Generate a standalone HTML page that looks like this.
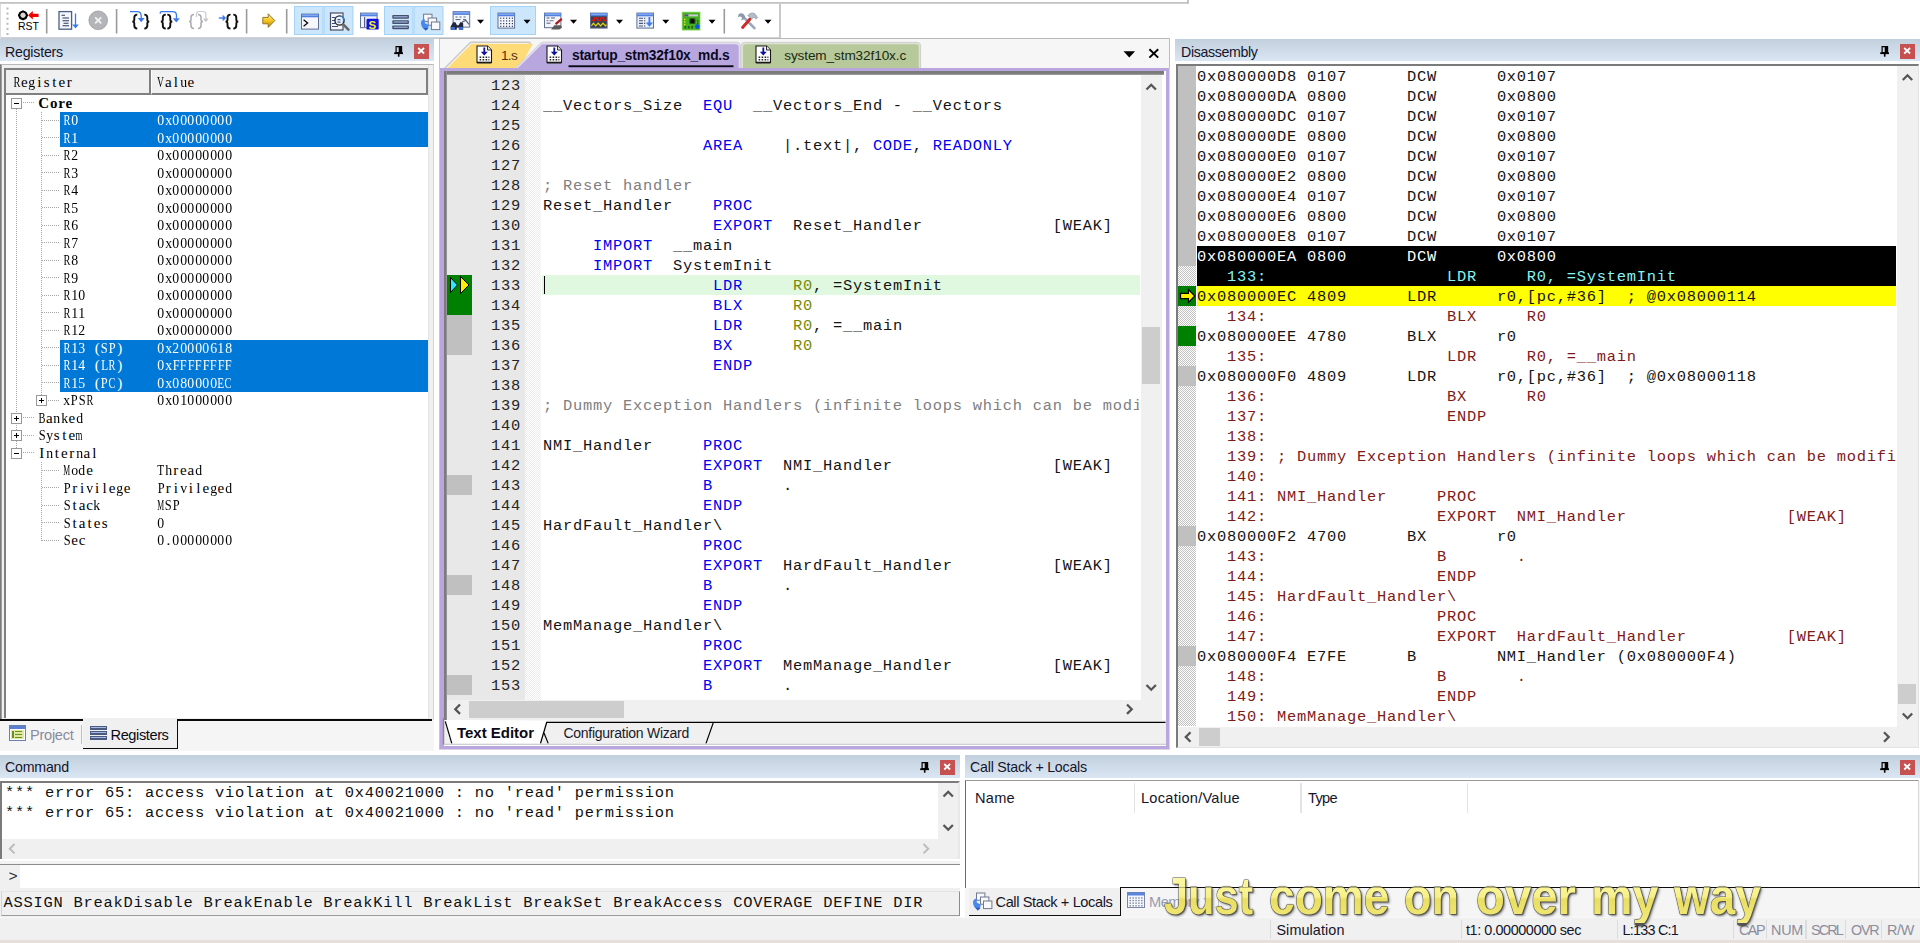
<!DOCTYPE html>
<html><head><meta charset="utf-8">
<style>
*{box-sizing:border-box;margin:0;padding:0}
html,body{width:1920px;height:943px;overflow:hidden;background:#fff}
body{position:relative;font-family:"Liberation Sans",sans-serif;font-size:14px;color:#000}
.abs,.a{position:absolute}
.mono{font-family:"Liberation Mono",monospace;font-size:15.4px;letter-spacing:0.76px;line-height:20px;white-space:pre}
.hdr{position:absolute;height:22px;background:linear-gradient(#c2cfdd,#dae6f3);font-size:14.2px;line-height:23px;padding-left:5px;color:#15152a;white-space:nowrap}
.xbtn{position:absolute;width:15px;height:15px;background:#c75050}
.xbtn svg{position:absolute;left:0;top:0}
.pin{position:absolute;width:9px;height:11px}
.ss{font-family:"Liberation Serif",serif;font-size:15px;white-space:pre}
.c{display:inline-block;width:7.5px;text-align:center;white-space:pre}
.c>i{display:inline-block;font-style:normal;transform-origin:50% 50%}
.row{position:absolute;height:17.5px;line-height:17.5px;left:0}
.sel{position:absolute;left:60px;width:368px;height:17.5px;background:#0078d7}
.dv{position:absolute;width:1px;background-image:linear-gradient(#a6a6a6 50%,transparent 50%);background-size:1px 2px}
.dh{position:absolute;height:1px;background-image:linear-gradient(90deg,#a6a6a6 50%,transparent 50%);background-size:2px 1px}
.box{position:absolute;width:11px;height:11px;border:1px solid #999;background:#fff}
.box:before{content:"";position:absolute;left:2px;top:4px;width:5px;height:1px;background:#000}
.box.p:after{content:"";position:absolute;left:4px;top:2px;width:1px;height:5px;background:#000}
</style></head><body>
<!-- toolbar -->
<div id="toolbar" class="a" style="left:0;top:0;width:1920px;height:39px;background:#fff">
<div class="a" style="left:0;top:2px;width:1188px;height:2px;background:linear-gradient(#bdbdbd,#d4d4d4)"></div>
<div class="a" style="left:1187px;top:0;width:2px;height:4px;background:#c4c4c4"></div>
<div class="a" style="left:0;top:37px;width:780px;height:2px;background:linear-gradient(#d6d9dd,#bfc6ce)"></div>
<div class="a" style="left:779px;top:4px;width:1.5px;height:34px;background:#c9c9c9"></div>
<div class="a" style="left:0;top:4px;width:1px;height:35px;background:#dcdcdc"></div>
<svg class="a" style="left:0;top:0" width="800" height="39" viewBox="0 0 800 39">
<rect x="6.5" y="7.5" width="2" height="2" fill="#b8b8b8"/>
<rect x="6.5" y="12.6" width="2" height="2" fill="#b8b8b8"/>
<rect x="6.5" y="17.7" width="2" height="2" fill="#b8b8b8"/>
<rect x="6.5" y="22.8" width="2" height="2" fill="#b8b8b8"/>
<rect x="6.5" y="27.9" width="2" height="2" fill="#b8b8b8"/>
<rect x="6.5" y="33.0" width="2" height="2" fill="#b8b8b8"/>
<path d="M23 11.400l2.700 1.200 1.300 2.700-1.300 2.700-2.700 1.200-2.700-1.200-1.300-2.700 1.300-2.700z" fill="#d8d8d8" stroke="#000" stroke-width="2.100" stroke-linejoin="round"/>
<path d="M28 15.300l4.800-4.300v2.700h5.800v3.200h-5.800v2.700z" fill="#f00000"/>
<text x="18" y="30" font-family="Liberation Sans" font-size="11.5" fill="#000" textLength="21" lengthAdjust="spacingAndGlyphs">RST</text>
<rect x="45.9" y="9" width="1.6" height="24.5" fill="#9b9b9b"/>
<rect x="59" y="11.6" width="12.6" height="17.6" fill="#f4f6fb" stroke="#4a6088" stroke-width="1.3"/>
<path d="M61.5 15.3h3.5M62.5 18h6.5M62.5 20.7h6.5M63.5 23.2h5M62.5 25.8h6.5" stroke="#2b3b5c" stroke-width="1.1"/>
<path d="M75.5 13.5v13" stroke="#3a7af0" stroke-width="1.3"/><path d="M72.2 24.6h6.6l-3.3 4z" fill="#3a7af0"/>
<circle cx="98.2" cy="20.3" r="9.3" fill="#b4b5b8" stroke="#9a9b9f" stroke-width="0.8"/>
<path d="M95.200 17.300l6 6M101.200 17.300l-6 6" stroke="#f4f4f4" stroke-width="1.700"/>
<rect x="115.8" y="9" width="1.6" height="24.5" fill="#9b9b9b"/>
<path d="M137.3 14.6 c-2.6 0 -3 1 -3 3 v2.2 c0 1.4 -0.8 1.8 -2 1.8 c1.2 0 2 0.4 2 1.8 v2.2 c0 2 0.4 3 3 3" fill="none" stroke="#111" stroke-width="1.9"/>
<path d="M144.3 14.6 c2.6 0 3 1 3 3 v2.2 c0 1.4 0.8 1.8 2 1.8 c-1.2 0 -2 0.4 -2 1.8 v2.2 c0 2 -0.4 3 -3 3" fill="none" stroke="#111" stroke-width="1.9"/>
<path d="M130 11.7h7c3 0 4.2 1.6 4.2 4.4v2.4" fill="none" stroke="#3a78f0" stroke-width="1.3"/><path d="M137.8 18h6.8l-3.4 4.2z" fill="#3a78f0"/>
<path d="M165.8 14.6 c-2.6 0 -3 1 -3 3 v2.2 c0 1.4 -0.8 1.8 -2 1.8 c1.2 0 2 0.4 2 1.8 v2.2 c0 2 0.4 3 3 3" fill="none" stroke="#111" stroke-width="1.9"/>
<path d="M167.3 14.6 c2.6 0 3 1 3 3 v2.2 c0 1.4 0.8 1.8 2 1.8 c-1.2 0 -2 0.4 -2 1.8 v2.2 c0 2 -0.4 3 -3 3" fill="none" stroke="#111" stroke-width="1.9"/>
<path d="M160.3 13.8v-1.2c0-0.6 0.4-0.9 1-0.9h11.2c3 0 4 1.4 4 3.8v3" fill="none" stroke="#3a78f0" stroke-width="1.3"/><path d="M172.8 18.3h7l-3.5 4.2z" fill="#3a78f0"/>
<path d="M194.0 14.6 c-2.6 0 -3 1 -3 3 v2.2 c0 1.4 -0.8 1.8 -2 1.8 c1.2 0 2 0.4 2 1.8 v2.2 c0 2 0.4 3 3 3" fill="none" stroke="#a9abb0" stroke-width="1.5"/>
<path d="M198.0 14.6 c2.6 0 3 1 3 3 v2.2 c0 1.4 0.8 1.8 2 1.8 c-1.2 0 -2 0.4 -2 1.8 v2.2 c0 2 -0.4 3 -3 3" fill="none" stroke="#a9abb0" stroke-width="1.5"/>
<path d="M196.5 17v-3c0-1.6 1-2.5 2.8-2.5h3.6c2 0 3 1 3 2.8v4.5" fill="none" stroke="#c9cbcf" stroke-width="1.2"/><path d="M203 18.6h5.6l-2.8 3.6z" fill="#c3c5c9"/>
<path d="M218.8 18h5" stroke="#3a78f0" stroke-width="1.4"/><path d="M222.6 14.8l3.6 3.2-3.6 3.2z" fill="#3a78f0"/>
<path d="M230.5 14.6 c-2.6 0 -3 1 -3 3 v2.2 c0 1.4 -0.8 1.8 -2 1.8 c1.2 0 2 0.4 2 1.8 v2.2 c0 2 0.4 3 3 3" fill="none" stroke="#111" stroke-width="1.9"/>
<path d="M233.3 14.6 c2.6 0 3 1 3 3 v2.2 c0 1.4 0.8 1.8 2 1.8 c-1.2 0 -2 0.4 -2 1.8 v2.2 c0 2 -0.4 3 -3 3" fill="none" stroke="#111" stroke-width="1.9"/>
<rect x="245.8" y="9" width="1.6" height="24.5" fill="#9b9b9b"/>
<defs><linearGradient id="yg" x1="0" y1="0" x2="0" y2="1"><stop offset="0" stop-color="#fff0a0"/><stop offset="0.5" stop-color="#f6c420"/><stop offset="1" stop-color="#b88a10"/></linearGradient></defs>
<path d="M262.8 17.4h5.4v-3.6l6.6 6.8-6.6 6.8v-3.6h-5.4z" fill="url(#yg)" stroke="#8a6a18" stroke-width="0.9"/>
<rect x="285.9" y="9" width="1.6" height="24.5" fill="#9b9b9b"/>
<rect x="294.5" y="6.5" width="28.5" height="28" fill="#cce6fb" stroke="#a3d3f9" stroke-width="1"/>
<rect x="324.0" y="6.5" width="29.0" height="28" fill="#cce6fb" stroke="#a3d3f9" stroke-width="1"/>
<rect x="384.5" y="6.5" width="28.5" height="28" fill="#cce6fb" stroke="#a3d3f9" stroke-width="1"/>
<rect x="414.0" y="6.5" width="29.0" height="28" fill="#cce6fb" stroke="#a3d3f9" stroke-width="1"/>
<rect x="490.5" y="6.5" width="45.0" height="28" fill="#cce6fb" stroke="#a3d3f9" stroke-width="1"/>
<rect x="301.5" y="14.1" width="17.0" height="15.0" fill="#f4f6fc" stroke="#5f6f8f" stroke-width="1"/><rect x="301.5" y="14.1" width="17.0" height="3.2" fill="#4f80e0"/><rect x="302.0" y="14.6" width="16.0" height="1.2" fill="#8fb0f0"/>
<path d="M303.600 19.800l4 3.200-4 3.200" fill="none" stroke="#000" stroke-width="1.250"/>
<rect x="330.5" y="13" width="12.5" height="17" fill="#f4f6fc" stroke="#4a4f60" stroke-width="1.2"/>
<path d="M332 17.5h3M332 20.5h3M332 23.5h3M332 26.5h6" stroke="#3a4f80" stroke-width="1"/>
<circle cx="339.5" cy="20.5" r="4.6" fill="#e8f0ff" fill-opacity="0.7" stroke="#222" stroke-width="1.4"/><path d="M339.5 15.9a4.6 4.6 0 0 1 4.6 4.6" fill="none" stroke="#2a8ae0" stroke-width="1.4"/>
<path d="M337.5 19h3v1.2h-3zM337.5 21.6h3v1.2h-3z" fill="#3a5fa0"/>
<path d="M343 24.2l5.4 5.4" stroke="#666" stroke-width="2.6" stroke-linecap="round"/>
<rect x="360.5" y="13.1" width="16.6" height="14.6" fill="#f0f3fa" stroke="#5f6f8f" stroke-width="1"/><rect x="360.5" y="13.1" width="16.6" height="3.2" fill="#4f80e0"/><rect x="361.0" y="13.6" width="15.6" height="1.2" fill="#8fb0f0"/>
<rect x="364" y="17" width="1.2" height="10" fill="#55607a"/>
<rect x="366.5" y="18.8" width="12.2" height="10.8" rx="1.2" fill="#1010e0"/>
<text x="368.6" y="28.6" font-family="Liberation Sans" font-weight="bold" font-size="11.5" fill="#f4f020">S</text>
<rect x="392.3" y="15.0" width="16.6" height="3.8" rx="0.8" fill="#44506e"/><rect x="393.6" y="16.2" width="14" height="1.2" fill="#9fb2dc"/>
<rect x="392.3" y="20.2" width="16.6" height="3.8" rx="0.8" fill="#44506e"/><rect x="393.6" y="21.4" width="14" height="1.2" fill="#9fb2dc"/>
<rect x="392.3" y="25.4" width="16.6" height="3.8" rx="0.8" fill="#44506e"/><rect x="393.6" y="26.6" width="14" height="1.2" fill="#9fb2dc"/>
<rect x="423.6" y="14.2" width="8.4" height="7.2" fill="#f8f9fd" stroke="#70788c" stroke-width="1"/>
<rect x="428.2" y="18" width="8.4" height="7.2" fill="#f8f9fd" stroke="#70788c" stroke-width="1"/>
<rect x="431.4" y="22" width="8.4" height="7.6" fill="#f8f9fd" stroke="#70788c" stroke-width="1"/>
<path d="M421 22.5c0.3-2.4 1.8-3.6 3.6-3.6l0.3 4.4 3.8 1.6-0.5 3.4-2.2 1.6c-2.8-0.4-5-3.4-5-7.4z" fill="#4a88ee"/><path d="M423.5 27.8l5 0.4-2.8 2.6z" fill="#2a58c8"/>
<rect x="453.1" y="11.7" width="16.6" height="15.4" fill="#f4f6fc" stroke="#5f6f8f" stroke-width="1"/><rect x="453.1" y="11.7" width="16.6" height="3.2" fill="#4f80e0"/><rect x="453.6" y="12.2" width="15.6" height="1.2" fill="#8fb0f0"/>
<path d="M455.5 17h2M459.5 17h2M463.5 17h2M455.5 19.6h5M463 19.6h3" stroke="#50607c" stroke-width="1"/>
<path d="M450.6 29.8v-3.4l2.6-4.2h2.2l1.6 3h1.6l1.6-3h2.2l0.8 1.4v6.2h-4.4v-2.4h-2v2.4z" fill="#202840"/><rect x="451.2" y="27" width="3.6" height="2.8" fill="#3a70e0"/><rect x="459.2" y="27" width="3.6" height="2.8" fill="#3a70e0"/>
<path d="M462 22l4-1.6 3 4" fill="none" stroke="#55607a" stroke-width="1.2"/>
<path d="M477.0 19.7h7l-3.5 4z" fill="#000"/>
<rect x="498.0" y="13.1" width="16.6" height="15.0" fill="#f4f6fc" stroke="#5f6f8f" stroke-width="1"/><rect x="498.0" y="13.1" width="16.6" height="3.2" fill="#4f80e0"/><rect x="498.5" y="13.6" width="15.6" height="1.2" fill="#8fb0f0"/>
<rect x="500.2" y="17.6" width="1.2" height="1.2" fill="#2c3c5c"/>
<rect x="503.1" y="17.6" width="1.2" height="1.2" fill="#2c3c5c"/>
<rect x="506.0" y="17.6" width="1.2" height="1.2" fill="#2c3c5c"/>
<rect x="508.9" y="17.6" width="1.2" height="1.2" fill="#2c3c5c"/>
<rect x="511.8" y="17.6" width="1.2" height="1.2" fill="#2c3c5c"/>
<rect x="500.2" y="20.3" width="1.2" height="1.2" fill="#2c3c5c"/>
<rect x="503.1" y="20.3" width="1.2" height="1.2" fill="#2c3c5c"/>
<rect x="506.0" y="20.3" width="1.2" height="1.2" fill="#2c3c5c"/>
<rect x="508.9" y="20.3" width="1.2" height="1.2" fill="#2c3c5c"/>
<rect x="511.8" y="20.3" width="1.2" height="1.2" fill="#2c3c5c"/>
<rect x="500.2" y="23.0" width="1.2" height="1.2" fill="#2c3c5c"/>
<rect x="503.1" y="23.0" width="1.2" height="1.2" fill="#2c3c5c"/>
<rect x="506.0" y="23.0" width="1.2" height="1.2" fill="#2c3c5c"/>
<rect x="508.9" y="23.0" width="1.2" height="1.2" fill="#2c3c5c"/>
<rect x="511.8" y="23.0" width="1.2" height="1.2" fill="#2c3c5c"/>
<rect x="500.2" y="25.7" width="1.2" height="1.2" fill="#2c3c5c"/>
<rect x="503.1" y="25.7" width="1.2" height="1.2" fill="#2c3c5c"/>
<rect x="506.0" y="25.7" width="1.2" height="1.2" fill="#2c3c5c"/>
<rect x="508.9" y="25.7" width="1.2" height="1.2" fill="#2c3c5c"/>
<rect x="511.8" y="25.7" width="1.2" height="1.2" fill="#2c3c5c"/>
<path d="M523.5 19.7h7l-3.5 4z" fill="#000"/>
<rect x="544.5" y="13.1" width="16.4" height="14.6" fill="#f4f6fc" stroke="#5f6f8f" stroke-width="1"/><rect x="544.5" y="13.1" width="16.4" height="3.2" fill="#4f80e0"/><rect x="545.0" y="13.6" width="15.4" height="1.2" fill="#8fb0f0"/>
<path d="M546.5 18h3M551 18h4M546.5 20.6h2M549.5 20.6h4M546.5 23.2h4" stroke="#8a8f9c" stroke-width="1.4"/>
<path d="M556.2 23.6l5-4.2" stroke="#b01818" stroke-width="2.2" stroke-linecap="round"/><path d="M551 29.6l3.4-4.4h6.4l1.2 2.2-2.6 2.2z" fill="#5a5a5a"/>
<path d="M570.0 19.7h7l-3.5 4z" fill="#000"/>
<rect x="590.5" y="13.1" width="16.6" height="15.0" fill="#3a3f4c" stroke="#5f6f8f" stroke-width="1"/><rect x="590.5" y="13.1" width="16.6" height="3.2" fill="#4f80e0"/><rect x="591.0" y="13.6" width="15.6" height="1.2" fill="#8fb0f0"/>
<path d="M591.4 20.4h3v-2.4h3.2v2.4h3.2v-2.4h3.2v2.4h2.4" fill="none" stroke="#f01010" stroke-width="1.3"/>
<path d="M591.4 25.8l2-2.6 2.4 2.6 2.4-2.6 2.4 2.6 2.4-2.6 2.4 2.6 1-1.2" fill="none" stroke="#e8d810" stroke-width="1.2"/>
<path d="M616.0 19.7h7l-3.5 4z" fill="#000"/>
<rect x="636.9" y="13.1" width="16.6" height="15.0" fill="#e8eefb" stroke="#5f6f8f" stroke-width="1"/><rect x="636.9" y="13.1" width="16.6" height="3.2" fill="#4f80e0"/><rect x="637.4" y="13.6" width="15.6" height="1.2" fill="#8fb0f0"/>
<path d="M639 18.2h4M639 20.8h4M639 23.4h4M639 26h4" stroke="#4a5a78" stroke-width="1.1"/><path d="M644.2 18.2h1M644.2 20.8h1M644.2 23.4h1M644.2 26h1" stroke="#222" stroke-width="1.1"/>
<path d="M649.4 17v6" stroke="#3a7af0" stroke-width="1.8"/><path d="M645.8 22.6h7.2l-3.6 4.2z" fill="#3a7af0"/>
<path d="M662.3 19.7h7l-3.5 4z" fill="#000"/>
<rect x="682.2" y="12.2" width="17.8" height="17.8" fill="#42b020" stroke="#7ad048" stroke-width="0.8"/>
<rect x="684.4" y="14.4" width="13.6" height="2" fill="#c8ccd0"/><rect x="684.4" y="14.4" width="4" height="2" fill="#50545c"/>
<circle cx="692.4" cy="21.2" r="2.8" fill="#101010"/><rect x="690" y="18.6" width="5" height="5" fill="none" stroke="#2c5c20" stroke-width="0.8"/>
<rect x="684" y="18.6" width="1.4" height="1.4" fill="#e8e020"/><rect x="684" y="21.2" width="1.4" height="1.4" fill="#e8e020"/><rect x="684" y="23.8" width="1.4" height="1.4" fill="#e8e020"/>
<path d="M684.6 26h1.6v2.6h-1.6zM688 26h1.6v2.6h-1.6zM691.4 26h1.6v2.6h-1.6zM697 20h1.4v1.4h-1.4zM697 22.6h1.4v1.4h-1.4z" fill="#285a20"/>
<circle cx="697.4" cy="26.6" r="2.3" fill="#1050e8"/>
<path d="M708.5 19.7h7l-3.5 4z" fill="#000"/>
<rect x="723.5" y="9" width="1.6" height="24.5" fill="#9b9b9b"/>
<path d="M742.8 16.4l11.6 11.8" stroke="#9aa6b8" stroke-width="2.6" stroke-linecap="round"/>
<path d="M740.6 13.2c-2 0.4-3 2.2-2.4 4.2l1.2-1 2 0.4 0.6 2-1.2 1.2c2 0.6 3.8-0.6 4.2-2.4 0.4-2.4-1.8-4.8-4.4-4.400z" fill="#8c98ac"/>
<path d="M750 19l-7.4 8.4" stroke="#d02828" stroke-width="3" stroke-linecap="round"/>
<path d="M747.8 15.600c1.800-2.600 5-3.400 7.200-1.600l2.600 3.600-1.800 1.400-1.800-2-2.200 1.800z" fill="#b4bcc8" stroke="#8a94a6" stroke-width="0.7"/>
<path d="M764.5 19.7h7l-3.5 4z" fill="#000"/>
</svg>
</div>
<!-- regs -->
<div id="regs" class="a" style="left:0;top:39px;width:434px;height:712px;background:#f5f5f5;overflow:hidden">
<div class="hdr" style="left:0;top:0;width:434px"></div>
<div class="a" style="left:5.0px;top:5.6px;font-size:14.20px;line-height:14.20px;letter-spacing:-0.220px;white-space:pre;color:#15152a;">Registers</div>
<svg class="a" style="left:393.5px;top:6.6px" width="10" height="11" viewBox="0 0 10 11"><path d="M2.100 0.600h5.400v6h-5.400z" fill="none" stroke="#000" stroke-width="1.200"/><rect x="4.700" y="0.600" width="3.400" height="6" fill="#000"/><rect x="0.200" y="6.300" width="8.800" height="1.800" fill="#000"/><rect x="3.900" y="8" width="1.600" height="2.700" fill="#000"/></svg>
<div class="xbtn" style="left:414.0px;top:5.0px"><svg width="15" height="15" viewBox="0 0 15 15"><path d="M4.200 4l5.900 5.500M10.100 4l-5.900 5.500" stroke="#fff" stroke-width="1.800"/></svg></div>
<div class="a" style="left:0;top:22px;width:434px;height:3px;background:#fff"></div>
<div class="a" style="left:0;top:25px;width:434px;height:656px;background:#f0f0f0;border-left:1px solid #7a7a7a;border-top:1px solid #b9b9b9;border-right:1px solid #d5d5d5"></div>
<div class="a" style="left:1px;top:26px;width:1px;height:654px;background:#a0a0a0"></div>
<div class="a" style="left:428px;top:26px;width:1px;height:654px;background:#e3e3e3"></div>
<div class="a" style="left:4px;top:29px;width:424px;height:650px;background:#fff;border-left:2px solid #808080;border-top:2px solid #808080"></div>
<div class="a" style="left:6px;top:31px;width:145px;height:25px;background:#f0f0f0;border-right:2px solid #808080;border-bottom:2px solid #808080"></div>
<div class="a" style="left:151px;top:31px;width:277px;height:25px;background:#f0f0f0;border-right:2px solid #808080;border-bottom:2px solid #808080;border-left:1px solid #fff"></div>
<div class="a ss" style="left:13px;top:35px;line-height:17px"><span class="c"><i style="margin:0 -1.25px;transform:scaleX(0.690)">R</i></span><span class="c">e</span><span class="c"><i style="margin:0 0.00px;transform:scaleX(0.920)">g</i></span><span class="c">i</span><span class="c">s</span><span class="c">t</span><span class="c">e</span><span class="c">r</span></div>
<div class="a ss" style="left:157px;top:35px;line-height:17px"><span class="c"><i style="margin:0 -1.67px;transform:scaleX(0.637)">V</i></span><span class="c">a</span><span class="c">l</span><span class="c"><i style="margin:0 0.00px;transform:scaleX(0.920)">u</i></span><span class="c">e</span></div>
<div class="sel" style="top:335.8px"></div>
<div class="sel" style="top:73.3px"></div>
<div class="sel" style="top:90.8px"></div>
<div class="sel" style="top:300.8px"></div>
<div class="sel" style="top:318.3px"></div>
<div class="dv" style="left:16px;top:69.8px;height:339.0px"></div>
<div class="dv" style="left:41px;top:73.3px;height:283.0px"></div>
<div class="dv" style="left:41px;top:423.3px;height:79.0px"></div>
<div class="dh" style="left:23px;top:63.1px;width:12px"></div>
<div class="box " style="left:11px;top:58.8px"></div>
<div class="row ss" style="left:38.3px;top:55.8px;color:#000;font-weight:bold;letter-spacing:0.800px">Core</div>
<div class="dh" style="left:42px;top:80.6px;width:18px"></div>
<div class="row ss" style="left:63.4px;top:73.3px;color:#fff"><span class="c"><i style="margin:0 -1.25px;transform:scaleX(0.690)">R</i></span><span class="c"><i style="margin:0 0.00px;transform:scaleX(0.920)">0</i></span></div>
<div class="row ss" style="left:157px;top:73.3px;color:#fff"><span class="c"><i style="margin:0 0.00px;transform:scaleX(0.920)">0</i></span><span class="c"><i style="margin:0 0.00px;transform:scaleX(0.920)">x</i></span><span class="c"><i style="margin:0 0.00px;transform:scaleX(0.920)">0</i></span><span class="c"><i style="margin:0 0.00px;transform:scaleX(0.920)">0</i></span><span class="c"><i style="margin:0 0.00px;transform:scaleX(0.920)">0</i></span><span class="c"><i style="margin:0 0.00px;transform:scaleX(0.920)">0</i></span><span class="c"><i style="margin:0 0.00px;transform:scaleX(0.920)">0</i></span><span class="c"><i style="margin:0 0.00px;transform:scaleX(0.920)">0</i></span><span class="c"><i style="margin:0 0.00px;transform:scaleX(0.920)">0</i></span><span class="c"><i style="margin:0 0.00px;transform:scaleX(0.920)">0</i></span></div>
<div class="dh" style="left:42px;top:98.1px;width:18px"></div>
<div class="row ss" style="left:63.4px;top:90.8px;color:#fff"><span class="c"><i style="margin:0 -1.25px;transform:scaleX(0.690)">R</i></span><span class="c"><i style="margin:0 0.00px;transform:scaleX(0.920)">1</i></span></div>
<div class="row ss" style="left:157px;top:90.8px;color:#fff"><span class="c"><i style="margin:0 0.00px;transform:scaleX(0.920)">0</i></span><span class="c"><i style="margin:0 0.00px;transform:scaleX(0.920)">x</i></span><span class="c"><i style="margin:0 0.00px;transform:scaleX(0.920)">0</i></span><span class="c"><i style="margin:0 0.00px;transform:scaleX(0.920)">0</i></span><span class="c"><i style="margin:0 0.00px;transform:scaleX(0.920)">0</i></span><span class="c"><i style="margin:0 0.00px;transform:scaleX(0.920)">0</i></span><span class="c"><i style="margin:0 0.00px;transform:scaleX(0.920)">0</i></span><span class="c"><i style="margin:0 0.00px;transform:scaleX(0.920)">0</i></span><span class="c"><i style="margin:0 0.00px;transform:scaleX(0.920)">0</i></span><span class="c"><i style="margin:0 0.00px;transform:scaleX(0.920)">0</i></span></div>
<div class="dh" style="left:42px;top:115.6px;width:18px"></div>
<div class="row ss" style="left:63.4px;top:108.3px;color:#000"><span class="c"><i style="margin:0 -1.25px;transform:scaleX(0.690)">R</i></span><span class="c"><i style="margin:0 0.00px;transform:scaleX(0.920)">2</i></span></div>
<div class="row ss" style="left:157px;top:108.3px;color:#000"><span class="c"><i style="margin:0 0.00px;transform:scaleX(0.920)">0</i></span><span class="c"><i style="margin:0 0.00px;transform:scaleX(0.920)">x</i></span><span class="c"><i style="margin:0 0.00px;transform:scaleX(0.920)">0</i></span><span class="c"><i style="margin:0 0.00px;transform:scaleX(0.920)">0</i></span><span class="c"><i style="margin:0 0.00px;transform:scaleX(0.920)">0</i></span><span class="c"><i style="margin:0 0.00px;transform:scaleX(0.920)">0</i></span><span class="c"><i style="margin:0 0.00px;transform:scaleX(0.920)">0</i></span><span class="c"><i style="margin:0 0.00px;transform:scaleX(0.920)">0</i></span><span class="c"><i style="margin:0 0.00px;transform:scaleX(0.920)">0</i></span><span class="c"><i style="margin:0 0.00px;transform:scaleX(0.920)">0</i></span></div>
<div class="dh" style="left:42px;top:133.1px;width:18px"></div>
<div class="row ss" style="left:63.4px;top:125.8px;color:#000"><span class="c"><i style="margin:0 -1.25px;transform:scaleX(0.690)">R</i></span><span class="c"><i style="margin:0 0.00px;transform:scaleX(0.920)">3</i></span></div>
<div class="row ss" style="left:157px;top:125.8px;color:#000"><span class="c"><i style="margin:0 0.00px;transform:scaleX(0.920)">0</i></span><span class="c"><i style="margin:0 0.00px;transform:scaleX(0.920)">x</i></span><span class="c"><i style="margin:0 0.00px;transform:scaleX(0.920)">0</i></span><span class="c"><i style="margin:0 0.00px;transform:scaleX(0.920)">0</i></span><span class="c"><i style="margin:0 0.00px;transform:scaleX(0.920)">0</i></span><span class="c"><i style="margin:0 0.00px;transform:scaleX(0.920)">0</i></span><span class="c"><i style="margin:0 0.00px;transform:scaleX(0.920)">0</i></span><span class="c"><i style="margin:0 0.00px;transform:scaleX(0.920)">0</i></span><span class="c"><i style="margin:0 0.00px;transform:scaleX(0.920)">0</i></span><span class="c"><i style="margin:0 0.00px;transform:scaleX(0.920)">0</i></span></div>
<div class="dh" style="left:42px;top:150.6px;width:18px"></div>
<div class="row ss" style="left:63.4px;top:143.3px;color:#000"><span class="c"><i style="margin:0 -1.25px;transform:scaleX(0.690)">R</i></span><span class="c"><i style="margin:0 0.00px;transform:scaleX(0.920)">4</i></span></div>
<div class="row ss" style="left:157px;top:143.3px;color:#000"><span class="c"><i style="margin:0 0.00px;transform:scaleX(0.920)">0</i></span><span class="c"><i style="margin:0 0.00px;transform:scaleX(0.920)">x</i></span><span class="c"><i style="margin:0 0.00px;transform:scaleX(0.920)">0</i></span><span class="c"><i style="margin:0 0.00px;transform:scaleX(0.920)">0</i></span><span class="c"><i style="margin:0 0.00px;transform:scaleX(0.920)">0</i></span><span class="c"><i style="margin:0 0.00px;transform:scaleX(0.920)">0</i></span><span class="c"><i style="margin:0 0.00px;transform:scaleX(0.920)">0</i></span><span class="c"><i style="margin:0 0.00px;transform:scaleX(0.920)">0</i></span><span class="c"><i style="margin:0 0.00px;transform:scaleX(0.920)">0</i></span><span class="c"><i style="margin:0 0.00px;transform:scaleX(0.920)">0</i></span></div>
<div class="dh" style="left:42px;top:168.1px;width:18px"></div>
<div class="row ss" style="left:63.4px;top:160.8px;color:#000"><span class="c"><i style="margin:0 -1.25px;transform:scaleX(0.690)">R</i></span><span class="c"><i style="margin:0 0.00px;transform:scaleX(0.920)">5</i></span></div>
<div class="row ss" style="left:157px;top:160.8px;color:#000"><span class="c"><i style="margin:0 0.00px;transform:scaleX(0.920)">0</i></span><span class="c"><i style="margin:0 0.00px;transform:scaleX(0.920)">x</i></span><span class="c"><i style="margin:0 0.00px;transform:scaleX(0.920)">0</i></span><span class="c"><i style="margin:0 0.00px;transform:scaleX(0.920)">0</i></span><span class="c"><i style="margin:0 0.00px;transform:scaleX(0.920)">0</i></span><span class="c"><i style="margin:0 0.00px;transform:scaleX(0.920)">0</i></span><span class="c"><i style="margin:0 0.00px;transform:scaleX(0.920)">0</i></span><span class="c"><i style="margin:0 0.00px;transform:scaleX(0.920)">0</i></span><span class="c"><i style="margin:0 0.00px;transform:scaleX(0.920)">0</i></span><span class="c"><i style="margin:0 0.00px;transform:scaleX(0.920)">0</i></span></div>
<div class="dh" style="left:42px;top:185.6px;width:18px"></div>
<div class="row ss" style="left:63.4px;top:178.3px;color:#000"><span class="c"><i style="margin:0 -1.25px;transform:scaleX(0.690)">R</i></span><span class="c"><i style="margin:0 0.00px;transform:scaleX(0.920)">6</i></span></div>
<div class="row ss" style="left:157px;top:178.3px;color:#000"><span class="c"><i style="margin:0 0.00px;transform:scaleX(0.920)">0</i></span><span class="c"><i style="margin:0 0.00px;transform:scaleX(0.920)">x</i></span><span class="c"><i style="margin:0 0.00px;transform:scaleX(0.920)">0</i></span><span class="c"><i style="margin:0 0.00px;transform:scaleX(0.920)">0</i></span><span class="c"><i style="margin:0 0.00px;transform:scaleX(0.920)">0</i></span><span class="c"><i style="margin:0 0.00px;transform:scaleX(0.920)">0</i></span><span class="c"><i style="margin:0 0.00px;transform:scaleX(0.920)">0</i></span><span class="c"><i style="margin:0 0.00px;transform:scaleX(0.920)">0</i></span><span class="c"><i style="margin:0 0.00px;transform:scaleX(0.920)">0</i></span><span class="c"><i style="margin:0 0.00px;transform:scaleX(0.920)">0</i></span></div>
<div class="dh" style="left:42px;top:203.1px;width:18px"></div>
<div class="row ss" style="left:63.4px;top:195.8px;color:#000"><span class="c"><i style="margin:0 -1.25px;transform:scaleX(0.690)">R</i></span><span class="c"><i style="margin:0 0.00px;transform:scaleX(0.920)">7</i></span></div>
<div class="row ss" style="left:157px;top:195.8px;color:#000"><span class="c"><i style="margin:0 0.00px;transform:scaleX(0.920)">0</i></span><span class="c"><i style="margin:0 0.00px;transform:scaleX(0.920)">x</i></span><span class="c"><i style="margin:0 0.00px;transform:scaleX(0.920)">0</i></span><span class="c"><i style="margin:0 0.00px;transform:scaleX(0.920)">0</i></span><span class="c"><i style="margin:0 0.00px;transform:scaleX(0.920)">0</i></span><span class="c"><i style="margin:0 0.00px;transform:scaleX(0.920)">0</i></span><span class="c"><i style="margin:0 0.00px;transform:scaleX(0.920)">0</i></span><span class="c"><i style="margin:0 0.00px;transform:scaleX(0.920)">0</i></span><span class="c"><i style="margin:0 0.00px;transform:scaleX(0.920)">0</i></span><span class="c"><i style="margin:0 0.00px;transform:scaleX(0.920)">0</i></span></div>
<div class="dh" style="left:42px;top:220.6px;width:18px"></div>
<div class="row ss" style="left:63.4px;top:213.3px;color:#000"><span class="c"><i style="margin:0 -1.25px;transform:scaleX(0.690)">R</i></span><span class="c"><i style="margin:0 0.00px;transform:scaleX(0.920)">8</i></span></div>
<div class="row ss" style="left:157px;top:213.3px;color:#000"><span class="c"><i style="margin:0 0.00px;transform:scaleX(0.920)">0</i></span><span class="c"><i style="margin:0 0.00px;transform:scaleX(0.920)">x</i></span><span class="c"><i style="margin:0 0.00px;transform:scaleX(0.920)">0</i></span><span class="c"><i style="margin:0 0.00px;transform:scaleX(0.920)">0</i></span><span class="c"><i style="margin:0 0.00px;transform:scaleX(0.920)">0</i></span><span class="c"><i style="margin:0 0.00px;transform:scaleX(0.920)">0</i></span><span class="c"><i style="margin:0 0.00px;transform:scaleX(0.920)">0</i></span><span class="c"><i style="margin:0 0.00px;transform:scaleX(0.920)">0</i></span><span class="c"><i style="margin:0 0.00px;transform:scaleX(0.920)">0</i></span><span class="c"><i style="margin:0 0.00px;transform:scaleX(0.920)">0</i></span></div>
<div class="dh" style="left:42px;top:238.1px;width:18px"></div>
<div class="row ss" style="left:63.4px;top:230.8px;color:#000"><span class="c"><i style="margin:0 -1.25px;transform:scaleX(0.690)">R</i></span><span class="c"><i style="margin:0 0.00px;transform:scaleX(0.920)">9</i></span></div>
<div class="row ss" style="left:157px;top:230.8px;color:#000"><span class="c"><i style="margin:0 0.00px;transform:scaleX(0.920)">0</i></span><span class="c"><i style="margin:0 0.00px;transform:scaleX(0.920)">x</i></span><span class="c"><i style="margin:0 0.00px;transform:scaleX(0.920)">0</i></span><span class="c"><i style="margin:0 0.00px;transform:scaleX(0.920)">0</i></span><span class="c"><i style="margin:0 0.00px;transform:scaleX(0.920)">0</i></span><span class="c"><i style="margin:0 0.00px;transform:scaleX(0.920)">0</i></span><span class="c"><i style="margin:0 0.00px;transform:scaleX(0.920)">0</i></span><span class="c"><i style="margin:0 0.00px;transform:scaleX(0.920)">0</i></span><span class="c"><i style="margin:0 0.00px;transform:scaleX(0.920)">0</i></span><span class="c"><i style="margin:0 0.00px;transform:scaleX(0.920)">0</i></span></div>
<div class="dh" style="left:42px;top:255.6px;width:18px"></div>
<div class="row ss" style="left:63.4px;top:248.3px;color:#000"><span class="c"><i style="margin:0 -1.25px;transform:scaleX(0.690)">R</i></span><span class="c"><i style="margin:0 0.00px;transform:scaleX(0.920)">1</i></span><span class="c"><i style="margin:0 0.00px;transform:scaleX(0.920)">0</i></span></div>
<div class="row ss" style="left:157px;top:248.3px;color:#000"><span class="c"><i style="margin:0 0.00px;transform:scaleX(0.920)">0</i></span><span class="c"><i style="margin:0 0.00px;transform:scaleX(0.920)">x</i></span><span class="c"><i style="margin:0 0.00px;transform:scaleX(0.920)">0</i></span><span class="c"><i style="margin:0 0.00px;transform:scaleX(0.920)">0</i></span><span class="c"><i style="margin:0 0.00px;transform:scaleX(0.920)">0</i></span><span class="c"><i style="margin:0 0.00px;transform:scaleX(0.920)">0</i></span><span class="c"><i style="margin:0 0.00px;transform:scaleX(0.920)">0</i></span><span class="c"><i style="margin:0 0.00px;transform:scaleX(0.920)">0</i></span><span class="c"><i style="margin:0 0.00px;transform:scaleX(0.920)">0</i></span><span class="c"><i style="margin:0 0.00px;transform:scaleX(0.920)">0</i></span></div>
<div class="dh" style="left:42px;top:273.1px;width:18px"></div>
<div class="row ss" style="left:63.4px;top:265.8px;color:#000"><span class="c"><i style="margin:0 -1.25px;transform:scaleX(0.690)">R</i></span><span class="c"><i style="margin:0 0.00px;transform:scaleX(0.920)">1</i></span><span class="c"><i style="margin:0 0.00px;transform:scaleX(0.920)">1</i></span></div>
<div class="row ss" style="left:157px;top:265.8px;color:#000"><span class="c"><i style="margin:0 0.00px;transform:scaleX(0.920)">0</i></span><span class="c"><i style="margin:0 0.00px;transform:scaleX(0.920)">x</i></span><span class="c"><i style="margin:0 0.00px;transform:scaleX(0.920)">0</i></span><span class="c"><i style="margin:0 0.00px;transform:scaleX(0.920)">0</i></span><span class="c"><i style="margin:0 0.00px;transform:scaleX(0.920)">0</i></span><span class="c"><i style="margin:0 0.00px;transform:scaleX(0.920)">0</i></span><span class="c"><i style="margin:0 0.00px;transform:scaleX(0.920)">0</i></span><span class="c"><i style="margin:0 0.00px;transform:scaleX(0.920)">0</i></span><span class="c"><i style="margin:0 0.00px;transform:scaleX(0.920)">0</i></span><span class="c"><i style="margin:0 0.00px;transform:scaleX(0.920)">0</i></span></div>
<div class="dh" style="left:42px;top:290.6px;width:18px"></div>
<div class="row ss" style="left:63.4px;top:283.3px;color:#000"><span class="c"><i style="margin:0 -1.25px;transform:scaleX(0.690)">R</i></span><span class="c"><i style="margin:0 0.00px;transform:scaleX(0.920)">1</i></span><span class="c"><i style="margin:0 0.00px;transform:scaleX(0.920)">2</i></span></div>
<div class="row ss" style="left:157px;top:283.3px;color:#000"><span class="c"><i style="margin:0 0.00px;transform:scaleX(0.920)">0</i></span><span class="c"><i style="margin:0 0.00px;transform:scaleX(0.920)">x</i></span><span class="c"><i style="margin:0 0.00px;transform:scaleX(0.920)">0</i></span><span class="c"><i style="margin:0 0.00px;transform:scaleX(0.920)">0</i></span><span class="c"><i style="margin:0 0.00px;transform:scaleX(0.920)">0</i></span><span class="c"><i style="margin:0 0.00px;transform:scaleX(0.920)">0</i></span><span class="c"><i style="margin:0 0.00px;transform:scaleX(0.920)">0</i></span><span class="c"><i style="margin:0 0.00px;transform:scaleX(0.920)">0</i></span><span class="c"><i style="margin:0 0.00px;transform:scaleX(0.920)">0</i></span><span class="c"><i style="margin:0 0.00px;transform:scaleX(0.920)">0</i></span></div>
<div class="dh" style="left:42px;top:308.1px;width:18px"></div>
<div class="row ss" style="left:63.4px;top:300.8px;color:#fff"><span class="c"><i style="margin:0 -1.25px;transform:scaleX(0.690)">R</i></span><span class="c"><i style="margin:0 0.00px;transform:scaleX(0.920)">1</i></span><span class="c"><i style="margin:0 0.00px;transform:scaleX(0.920)">3</i></span><span class="c"> </span><span class="c">(</span><span class="c"><i style="margin:0 -0.42px;transform:scaleX(0.827)">S</i></span><span class="c"><i style="margin:0 -0.42px;transform:scaleX(0.827)">P</i></span><span class="c">)</span></div>
<div class="row ss" style="left:157px;top:300.8px;color:#fff"><span class="c"><i style="margin:0 0.00px;transform:scaleX(0.920)">0</i></span><span class="c"><i style="margin:0 0.00px;transform:scaleX(0.920)">x</i></span><span class="c"><i style="margin:0 0.00px;transform:scaleX(0.920)">2</i></span><span class="c"><i style="margin:0 0.00px;transform:scaleX(0.920)">0</i></span><span class="c"><i style="margin:0 0.00px;transform:scaleX(0.920)">0</i></span><span class="c"><i style="margin:0 0.00px;transform:scaleX(0.920)">0</i></span><span class="c"><i style="margin:0 0.00px;transform:scaleX(0.920)">0</i></span><span class="c"><i style="margin:0 0.00px;transform:scaleX(0.920)">6</i></span><span class="c"><i style="margin:0 0.00px;transform:scaleX(0.920)">1</i></span><span class="c"><i style="margin:0 0.00px;transform:scaleX(0.920)">8</i></span></div>
<div class="dh" style="left:42px;top:325.6px;width:18px"></div>
<div class="row ss" style="left:63.4px;top:318.3px;color:#fff"><span class="c"><i style="margin:0 -1.25px;transform:scaleX(0.690)">R</i></span><span class="c"><i style="margin:0 0.00px;transform:scaleX(0.920)">1</i></span><span class="c"><i style="margin:0 0.00px;transform:scaleX(0.920)">4</i></span><span class="c"> </span><span class="c">(</span><span class="c"><i style="margin:0 -0.83px;transform:scaleX(0.753)">L</i></span><span class="c"><i style="margin:0 -1.25px;transform:scaleX(0.690)">R</i></span><span class="c">)</span></div>
<div class="row ss" style="left:157px;top:318.3px;color:#fff"><span class="c"><i style="margin:0 0.00px;transform:scaleX(0.920)">0</i></span><span class="c"><i style="margin:0 0.00px;transform:scaleX(0.920)">x</i></span><span class="c"><i style="margin:0 -0.42px;transform:scaleX(0.827)">F</i></span><span class="c"><i style="margin:0 -0.42px;transform:scaleX(0.827)">F</i></span><span class="c"><i style="margin:0 -0.42px;transform:scaleX(0.827)">F</i></span><span class="c"><i style="margin:0 -0.42px;transform:scaleX(0.827)">F</i></span><span class="c"><i style="margin:0 -0.42px;transform:scaleX(0.827)">F</i></span><span class="c"><i style="margin:0 -0.42px;transform:scaleX(0.827)">F</i></span><span class="c"><i style="margin:0 -0.42px;transform:scaleX(0.827)">F</i></span><span class="c"><i style="margin:0 -0.42px;transform:scaleX(0.827)">F</i></span></div>
<div class="dh" style="left:42px;top:343.1px;width:18px"></div>
<div class="row ss" style="left:63.4px;top:335.8px;color:#fff"><span class="c"><i style="margin:0 -1.25px;transform:scaleX(0.690)">R</i></span><span class="c"><i style="margin:0 0.00px;transform:scaleX(0.920)">1</i></span><span class="c"><i style="margin:0 0.00px;transform:scaleX(0.920)">5</i></span><span class="c"> </span><span class="c">(</span><span class="c"><i style="margin:0 -0.42px;transform:scaleX(0.827)">P</i></span><span class="c"><i style="margin:0 -1.25px;transform:scaleX(0.690)">C</i></span><span class="c">)</span></div>
<div class="row ss" style="left:157px;top:335.8px;color:#fff"><span class="c"><i style="margin:0 0.00px;transform:scaleX(0.920)">0</i></span><span class="c"><i style="margin:0 0.00px;transform:scaleX(0.920)">x</i></span><span class="c"><i style="margin:0 0.00px;transform:scaleX(0.920)">0</i></span><span class="c"><i style="margin:0 0.00px;transform:scaleX(0.920)">8</i></span><span class="c"><i style="margin:0 0.00px;transform:scaleX(0.920)">0</i></span><span class="c"><i style="margin:0 0.00px;transform:scaleX(0.920)">0</i></span><span class="c"><i style="margin:0 0.00px;transform:scaleX(0.920)">0</i></span><span class="c"><i style="margin:0 0.00px;transform:scaleX(0.920)">0</i></span><span class="c"><i style="margin:0 -0.83px;transform:scaleX(0.753)">E</i></span><span class="c"><i style="margin:0 -1.25px;transform:scaleX(0.690)">C</i></span></div>
<div class="dh" style="left:48px;top:360.6px;width:12px"></div>
<div class="box p" style="left:36px;top:356.3px"></div>
<div class="row ss" style="left:63.4px;top:353.3px;color:#000"><span class="c"><i style="margin:0 0.00px;transform:scaleX(0.920)">x</i></span><span class="c"><i style="margin:0 -0.42px;transform:scaleX(0.827)">P</i></span><span class="c"><i style="margin:0 -0.42px;transform:scaleX(0.827)">S</i></span><span class="c"><i style="margin:0 -1.25px;transform:scaleX(0.690)">R</i></span></div>
<div class="row ss" style="left:157px;top:353.3px;color:#000"><span class="c"><i style="margin:0 0.00px;transform:scaleX(0.920)">0</i></span><span class="c"><i style="margin:0 0.00px;transform:scaleX(0.920)">x</i></span><span class="c"><i style="margin:0 0.00px;transform:scaleX(0.920)">0</i></span><span class="c"><i style="margin:0 0.00px;transform:scaleX(0.920)">1</i></span><span class="c"><i style="margin:0 0.00px;transform:scaleX(0.920)">0</i></span><span class="c"><i style="margin:0 0.00px;transform:scaleX(0.920)">0</i></span><span class="c"><i style="margin:0 0.00px;transform:scaleX(0.920)">0</i></span><span class="c"><i style="margin:0 0.00px;transform:scaleX(0.920)">0</i></span><span class="c"><i style="margin:0 0.00px;transform:scaleX(0.920)">0</i></span><span class="c"><i style="margin:0 0.00px;transform:scaleX(0.920)">0</i></span></div>
<div class="dh" style="left:23px;top:378.1px;width:12px"></div>
<div class="box p" style="left:11px;top:373.8px"></div>
<div class="row ss" style="left:38.0px;top:370.8px;color:#000"><span class="c"><i style="margin:0 -1.25px;transform:scaleX(0.690)">B</i></span><span class="c">a</span><span class="c"><i style="margin:0 0.00px;transform:scaleX(0.920)">n</i></span><span class="c"><i style="margin:0 0.00px;transform:scaleX(0.920)">k</i></span><span class="c">e</span><span class="c"><i style="margin:0 0.00px;transform:scaleX(0.920)">d</i></span></div>
<div class="dh" style="left:23px;top:395.6px;width:12px"></div>
<div class="box p" style="left:11px;top:391.3px"></div>
<div class="row ss" style="left:38.0px;top:388.3px;color:#000"><span class="c"><i style="margin:0 -0.42px;transform:scaleX(0.827)">S</i></span><span class="c"><i style="margin:0 0.00px;transform:scaleX(0.920)">y</i></span><span class="c">s</span><span class="c">t</span><span class="c">e</span><span class="c"><i style="margin:0 -2.08px;transform:scaleX(0.591)">m</i></span></div>
<div class="dh" style="left:23px;top:413.1px;width:12px"></div>
<div class="box " style="left:11px;top:408.8px"></div>
<div class="row ss" style="left:38.0px;top:405.8px;color:#000"><span class="c">I</span><span class="c"><i style="margin:0 0.00px;transform:scaleX(0.920)">n</i></span><span class="c">t</span><span class="c">e</span><span class="c">r</span><span class="c"><i style="margin:0 0.00px;transform:scaleX(0.920)">n</i></span><span class="c">a</span><span class="c">l</span></div>
<div class="dh" style="left:42px;top:430.6px;width:18px"></div>
<div class="row ss" style="left:63.4px;top:423.3px;color:#000"><span class="c"><i style="margin:0 -2.92px;transform:scaleX(0.517)">M</i></span><span class="c"><i style="margin:0 0.00px;transform:scaleX(0.920)">o</i></span><span class="c"><i style="margin:0 0.00px;transform:scaleX(0.920)">d</i></span><span class="c">e</span></div>
<div class="row ss" style="left:157px;top:423.3px;color:#000"><span class="c"><i style="margin:0 -0.83px;transform:scaleX(0.753)">T</i></span><span class="c"><i style="margin:0 0.00px;transform:scaleX(0.920)">h</i></span><span class="c">r</span><span class="c">e</span><span class="c">a</span><span class="c"><i style="margin:0 0.00px;transform:scaleX(0.920)">d</i></span></div>
<div class="dh" style="left:42px;top:448.1px;width:18px"></div>
<div class="row ss" style="left:63.4px;top:440.8px;color:#000"><span class="c"><i style="margin:0 -0.42px;transform:scaleX(0.827)">P</i></span><span class="c">r</span><span class="c">i</span><span class="c"><i style="margin:0 0.00px;transform:scaleX(0.920)">v</i></span><span class="c">i</span><span class="c">l</span><span class="c">e</span><span class="c"><i style="margin:0 0.00px;transform:scaleX(0.920)">g</i></span><span class="c">e</span></div>
<div class="row ss" style="left:157px;top:440.8px;color:#000"><span class="c"><i style="margin:0 -0.42px;transform:scaleX(0.827)">P</i></span><span class="c">r</span><span class="c">i</span><span class="c"><i style="margin:0 0.00px;transform:scaleX(0.920)">v</i></span><span class="c">i</span><span class="c">l</span><span class="c">e</span><span class="c"><i style="margin:0 0.00px;transform:scaleX(0.920)">g</i></span><span class="c">e</span><span class="c"><i style="margin:0 0.00px;transform:scaleX(0.920)">d</i></span></div>
<div class="dh" style="left:42px;top:465.6px;width:18px"></div>
<div class="row ss" style="left:63.4px;top:458.3px;color:#000"><span class="c"><i style="margin:0 -0.42px;transform:scaleX(0.827)">S</i></span><span class="c">t</span><span class="c">a</span><span class="c">c</span><span class="c"><i style="margin:0 0.00px;transform:scaleX(0.920)">k</i></span></div>
<div class="row ss" style="left:157px;top:458.3px;color:#000"><span class="c"><i style="margin:0 -2.92px;transform:scaleX(0.517)">M</i></span><span class="c"><i style="margin:0 -0.42px;transform:scaleX(0.827)">S</i></span><span class="c"><i style="margin:0 -0.42px;transform:scaleX(0.827)">P</i></span></div>
<div class="dh" style="left:42px;top:483.1px;width:18px"></div>
<div class="row ss" style="left:63.4px;top:475.8px;color:#000"><span class="c"><i style="margin:0 -0.42px;transform:scaleX(0.827)">S</i></span><span class="c">t</span><span class="c">a</span><span class="c">t</span><span class="c">e</span><span class="c">s</span></div>
<div class="row ss" style="left:157px;top:475.8px;color:#000"><span class="c"><i style="margin:0 0.00px;transform:scaleX(0.920)">0</i></span></div>
<div class="dh" style="left:42px;top:500.6px;width:18px"></div>
<div class="row ss" style="left:63.4px;top:493.3px;color:#000"><span class="c"><i style="margin:0 -0.42px;transform:scaleX(0.827)">S</i></span><span class="c">e</span><span class="c">c</span></div>
<div class="row ss" style="left:157px;top:493.3px;color:#000"><span class="c"><i style="margin:0 0.00px;transform:scaleX(0.920)">0</i></span><span class="c">.</span><span class="c"><i style="margin:0 0.00px;transform:scaleX(0.920)">0</i></span><span class="c"><i style="margin:0 0.00px;transform:scaleX(0.920)">0</i></span><span class="c"><i style="margin:0 0.00px;transform:scaleX(0.920)">0</i></span><span class="c"><i style="margin:0 0.00px;transform:scaleX(0.920)">0</i></span><span class="c"><i style="margin:0 0.00px;transform:scaleX(0.920)">0</i></span><span class="c"><i style="margin:0 0.00px;transform:scaleX(0.920)">0</i></span><span class="c"><i style="margin:0 0.00px;transform:scaleX(0.920)">0</i></span><span class="c"><i style="margin:0 0.00px;transform:scaleX(0.920)">0</i></span></div>
<div class="a" style="left:0;top:680.300px;width:432px;height:1.600px;background:#0a0a0a"></div>
<div class="a" style="left:83px;top:680px;width:95px;height:30px;background:#f0f0f0;border-right:1.700px solid #0a0a0a;border-bottom:1.700px solid #0a0a0a"></div>
<div class="a" style="left:81px;top:686px;width:1px;height:19px;background:#c0c0c0"></div>
<svg class="a" style="left:9px;top:686px" width="17" height="16" viewBox="0 0 17 16"><rect x="0.5" y="0.5" width="16" height="15" fill="#fff" stroke="#6a7fb0"/><rect x="1" y="1" width="15" height="3" fill="#5c7fd0"/><rect x="2" y="5" width="13" height="9" fill="#dfe8a0"/><path d="M3 6h2v7h-2zM6 6h7v1h-7zM6 9h7v1h-7zM6 12h7v1h-7z" fill="#6f8f20"/></svg>
<div class="a" style="left:30.0px;top:688.9px;font-size:14.60px;line-height:14.60px;letter-spacing:-0.277px;white-space:pre;color:#8a8a9c;">Project</div>
<svg class="a" style="left:90px;top:687px" width="17" height="14" viewBox="0 0 17 14"><g fill="#4a5a80"><rect x="0" y="0" width="17" height="4"/><rect x="0" y="5" width="17" height="4"/><rect x="0" y="10" width="17" height="4"/></g><g fill="#a8b8e0"><rect x="1" y="1" width="15" height="1"/><rect x="1" y="6" width="15" height="1"/><rect x="1" y="11" width="15" height="1"/></g></svg>
<div class="a" style="left:110.5px;top:688.9px;font-size:14.60px;line-height:14.60px;letter-spacing:-0.407px;white-space:pre;color:#0a0a14;">Registers</div>
</div>
<!-- editor -->
<div id="editor" class="a" style="left:439px;top:38px;width:731px;height:713px;overflow:hidden">
<div class="a" style="left:0;top:0;width:731px;height:31px;background:#f6f6f6;border-top:1.700px solid #b9b9b9;border-left:1px solid #c6c6c6;border-right:1.5px solid #bdbdbd"></div>
<svg class="a" style="left:0;top:0" width="731" height="31" viewBox="439 38 731 31">
<path d="M444.500 68.600L469.500 43.200q1-1 2.600-1H529q2 0 0.800 1.600L506 68.600z" fill="none" stroke="#c9c9c9" stroke-width="1.4"/>
<path d="M447 68.600L471.500 43.700h61.500l-14 24.900z" fill="#ffdb77"/>
<path d="M741 68.600V46q0-3.600 3.600-3.600H917q3.600 0 3.600 3.600v22.600z" fill="#dfe3d6" stroke="#cfcfcf" stroke-width="1"/>
<path d="M743 68.600V47q0-2.800 2.800-2.800H916q2.800 0 2.800 2.800v21.600z" fill="#b7c99a"/>
<path d="M515 68.600L540.500 43.200q1-1 2.600-1H736q4.400 0 4.400 4.400v22z" fill="#e4dcf2" stroke="#cfcfcf" stroke-width="1"/>
<path d="M517.500 68.600L542 44.300H735.500q3.200 0 3.200 3.200v21.100z" fill="#b8a6de"/>
<rect x="568.500" y="65.300" width="165" height="1.900" fill="#0a0a14"/>
<path d="M1123.500 51.200h11.600l-5.800 6.400z" fill="#000"/>
<path d="M1149.400 49.200l8.800 8.400M1158.200 49.200l-8.800 8.400" stroke="#000" stroke-width="1.900"/>
</svg>
<svg class="a" style="left:37px;top:7px" width="17" height="19" viewBox="0 0 17 19"><path d="M1 1h10.500l4 4v12.500h-14.500z" fill="#fff" stroke="#1a1a1a" stroke-width="1.1"/><path d="M1 17.6h14.500" stroke="#1a1a1a" stroke-width="1.8"/><path d="M11.500 1v4h4" fill="#e8e8e8" stroke="#1a1a1a" stroke-width="0.9"/><path d="M7.400 2.600h1.800v4.200h2.600l-3.500 3.800-3.500-3.800h2.600z" fill="#10109a"/><path d="M3.600 12.200h1.600M6.600 12.200h1.600M9.600 12.200h1.600M12.400 12.200h1M3.600 14.800h1.600M6.600 14.800h1.600M9.600 14.800h1.600M12.400 14.800h1" stroke="#222" stroke-width="1.5"/></svg>
<svg class="a" style="left:107px;top:7px" width="17" height="19" viewBox="0 0 17 19"><path d="M1 1h10.500l4 4v12.500h-14.500z" fill="#fff" stroke="#1a1a1a" stroke-width="1.1"/><path d="M1 17.6h14.500" stroke="#1a1a1a" stroke-width="1.8"/><path d="M11.500 1v4h4" fill="#e8e8e8" stroke="#1a1a1a" stroke-width="0.9"/><path d="M7.400 2.600h1.800v4.200h2.600l-3.500 3.800-3.500-3.800h2.600z" fill="#10109a"/><path d="M3.600 12.200h1.600M6.600 12.200h1.600M9.600 12.200h1.600M12.400 12.200h1M3.600 14.800h1.600M6.600 14.800h1.600M9.600 14.800h1.600M12.400 14.800h1" stroke="#222" stroke-width="1.5"/></svg>
<svg class="a" style="left:316px;top:7px" width="17" height="19" viewBox="0 0 17 19"><path d="M1 1h10.500l4 4v12.500h-14.500z" fill="#fff" stroke="#1a1a1a" stroke-width="1.1"/><path d="M1 17.6h14.500" stroke="#1a1a1a" stroke-width="1.8"/><path d="M11.500 1v4h4" fill="#e8e8e8" stroke="#1a1a1a" stroke-width="0.9"/><path d="M7.400 2.600h1.800v4.200h2.600l-3.500 3.800-3.500-3.800h2.600z" fill="#10109a"/><path d="M3.600 12.200h1.600M6.600 12.200h1.600M9.600 12.200h1.600M12.400 12.200h1M3.600 14.800h1.600M6.600 14.800h1.600M9.600 14.800h1.600M12.400 14.800h1" stroke="#222" stroke-width="1.5"/></svg>
<div class="a" style="left:62.0px;top:11.0px;font-size:13.60px;line-height:13.60px;letter-spacing:-0.714px;white-space:pre;color:#5a2a14;">1.s</div>
<div class="a" style="left:133.0px;top:10.9px;font-size:13.80px;line-height:13.80px;letter-spacing:-0.197px;white-space:pre;color:#0a0a1e;font-weight:bold;">startup_stm32f10x_md.s</div>
<div class="a" style="left:345.2px;top:11.0px;font-size:13.60px;line-height:13.60px;letter-spacing:-0.109px;white-space:pre;color:#1a2a10;">system_stm32f10x.c</div>
<div class="a" style="left:1px;top:30px;width:729.500px;height:681.200px;background:#b9a6df"></div>
<div class="a" style="left:0;top:30px;width:1px;height:682px;background:#c6c6c6"></div>
<div class="a" style="left:0;top:711px;width:731px;height:0.700px;background:#d9d4e2"></div>
<div class="a" style="left:730.300px;top:30px;width:0.700px;height:682px;background:#d9d4e2"></div>
<div class="a" style="left:4.500px;top:33px;width:722.500px;height:675px;background:#fff"></div>
<div class="a" style="left:4.500px;top:33px;width:720px;height:3.500px;background:linear-gradient(#7b7b7b 60%,#a5a5a5)"></div>
<div class="a" style="left:4.500px;top:33px;width:3.500px;height:651px;background:linear-gradient(90deg,#7b7b7b 60%,#a5a5a5)"></div>
<div class="a" style="left:8px;top:36.500px;width:78px;height:625px;background:#e8e8e8"></div>
<div class="a" style="left:86px;top:36.500px;width:16px;height:625px;background:#fff repeating-conic-gradient(#ececec 0 25%,#fff 0 50%) 0 0/2px 2px"></div>
<div class="a" style="left:8px;top:237px;width:25px;height:40px;background:#008000"></div>
<div class="a" style="left:8px;top:277px;width:25px;height:40px;background:#c0c0c0"></div>
<div class="a" style="left:8px;top:437px;width:25px;height:20px;background:#c0c0c0"></div>
<div class="a" style="left:8px;top:537px;width:25px;height:20px;background:#c0c0c0"></div>
<div class="a" style="left:8px;top:637px;width:25px;height:20px;background:#c0c0c0"></div>
<svg class="a" style="left:8px;top:237px" width="25" height="20" viewBox="0 0 25 20"><path d="M3.500 2.500l7 7.500-7 7.500z" fill="#30e8f8" stroke="#000" stroke-width="1"/><path d="M13.500 1.500l8.500 8.500-8.500 8.500z" fill="#f8f000" stroke="#000" stroke-width="1"/></svg>
<div class="a" style="left:103px;top:236.7px;width:597.500px;height:20px;background:#e0f8e0"></div>
<div class="a" style="left:104.500px;top:238px;width:1.600px;height:18px;background:#000"></div>
<div class="a mono" style="left:52px;top:37.6px;color:#262626">123</div>
<div class="a mono" style="left:52px;top:57.6px;color:#262626">124</div>
<div class="a mono" style="left:104px;top:57.6px;width:596px;overflow:hidden;color:#141414">__Vectors_Size  <span style="color:#0000f0">EQU</span>  __Vectors_End - __Vectors</div>
<div class="a mono" style="left:52px;top:77.6px;color:#262626">125</div>
<div class="a mono" style="left:52px;top:97.6px;color:#262626">126</div>
<div class="a mono" style="left:104px;top:97.6px;width:596px;overflow:hidden;color:#141414">                <span style="color:#0000f0">AREA</span>    |.text|, <span style="color:#0000f0">CODE</span>, <span style="color:#0000f0">READONLY</span></div>
<div class="a mono" style="left:52px;top:117.6px;color:#262626">127</div>
<div class="a mono" style="left:52px;top:137.6px;color:#262626">128</div>
<div class="a mono" style="left:104px;top:137.6px;width:596px;overflow:hidden;color:#141414"><span style="color:#808080">; Reset handler</span></div>
<div class="a mono" style="left:52px;top:157.6px;color:#262626">129</div>
<div class="a mono" style="left:104px;top:157.6px;width:596px;overflow:hidden;color:#141414">Reset_Handler    <span style="color:#0000f0">PROC</span></div>
<div class="a mono" style="left:52px;top:177.6px;color:#262626">130</div>
<div class="a mono" style="left:104px;top:177.6px;width:596px;overflow:hidden;color:#141414">                 <span style="color:#0000f0">EXPORT</span>  Reset_Handler             [WEAK]</div>
<div class="a mono" style="left:52px;top:197.6px;color:#262626">131</div>
<div class="a mono" style="left:104px;top:197.6px;width:596px;overflow:hidden;color:#141414">     <span style="color:#0000f0">IMPORT</span>  __main</div>
<div class="a mono" style="left:52px;top:217.6px;color:#262626">132</div>
<div class="a mono" style="left:104px;top:217.6px;width:596px;overflow:hidden;color:#141414">     <span style="color:#0000f0">IMPORT</span>  SystemInit</div>
<div class="a mono" style="left:52px;top:237.6px;color:#262626">133</div>
<div class="a mono" style="left:104px;top:237.6px;width:596px;overflow:hidden;color:#141414">                 <span style="color:#0000f0">LDR</span>     <span style="color:#7a8a00">R0</span>, =SystemInit</div>
<div class="a mono" style="left:52px;top:257.6px;color:#262626">134</div>
<div class="a mono" style="left:104px;top:257.6px;width:596px;overflow:hidden;color:#141414">                 <span style="color:#0000f0">BLX</span>     <span style="color:#7a8a00">R0</span></div>
<div class="a mono" style="left:52px;top:277.6px;color:#262626">135</div>
<div class="a mono" style="left:104px;top:277.6px;width:596px;overflow:hidden;color:#141414">                 <span style="color:#0000f0">LDR</span>     <span style="color:#7a8a00">R0</span>, =__main</div>
<div class="a mono" style="left:52px;top:297.6px;color:#262626">136</div>
<div class="a mono" style="left:104px;top:297.6px;width:596px;overflow:hidden;color:#141414">                 <span style="color:#0000f0">BX</span>      <span style="color:#7a8a00">R0</span></div>
<div class="a mono" style="left:52px;top:317.6px;color:#262626">137</div>
<div class="a mono" style="left:104px;top:317.6px;width:596px;overflow:hidden;color:#141414">                 <span style="color:#0000f0">ENDP</span></div>
<div class="a mono" style="left:52px;top:337.6px;color:#262626">138</div>
<div class="a mono" style="left:52px;top:357.6px;color:#262626">139</div>
<div class="a mono" style="left:104px;top:357.6px;width:596px;overflow:hidden;color:#141414"><span style="color:#808080">; Dummy Exception Handlers (infinite loops which can be modified)</span></div>
<div class="a mono" style="left:52px;top:377.6px;color:#262626">140</div>
<div class="a mono" style="left:52px;top:397.6px;color:#262626">141</div>
<div class="a mono" style="left:104px;top:397.6px;width:596px;overflow:hidden;color:#141414">NMI_Handler     <span style="color:#0000f0">PROC</span></div>
<div class="a mono" style="left:52px;top:417.6px;color:#262626">142</div>
<div class="a mono" style="left:104px;top:417.6px;width:596px;overflow:hidden;color:#141414">                <span style="color:#0000f0">EXPORT</span>  NMI_Handler                [WEAK]</div>
<div class="a mono" style="left:52px;top:437.6px;color:#262626">143</div>
<div class="a mono" style="left:104px;top:437.6px;width:596px;overflow:hidden;color:#141414">                <span style="color:#0000f0">B</span>       .</div>
<div class="a mono" style="left:52px;top:457.6px;color:#262626">144</div>
<div class="a mono" style="left:104px;top:457.6px;width:596px;overflow:hidden;color:#141414">                <span style="color:#0000f0">ENDP</span></div>
<div class="a mono" style="left:52px;top:477.6px;color:#262626">145</div>
<div class="a mono" style="left:104px;top:477.6px;width:596px;overflow:hidden;color:#141414">HardFault_Handler\</div>
<div class="a mono" style="left:52px;top:497.6px;color:#262626">146</div>
<div class="a mono" style="left:104px;top:497.6px;width:596px;overflow:hidden;color:#141414">                <span style="color:#0000f0">PROC</span></div>
<div class="a mono" style="left:52px;top:517.6px;color:#262626">147</div>
<div class="a mono" style="left:104px;top:517.6px;width:596px;overflow:hidden;color:#141414">                <span style="color:#0000f0">EXPORT</span>  HardFault_Handler          [WEAK]</div>
<div class="a mono" style="left:52px;top:537.6px;color:#262626">148</div>
<div class="a mono" style="left:104px;top:537.6px;width:596px;overflow:hidden;color:#141414">                <span style="color:#0000f0">B</span>       .</div>
<div class="a mono" style="left:52px;top:557.6px;color:#262626">149</div>
<div class="a mono" style="left:104px;top:557.6px;width:596px;overflow:hidden;color:#141414">                <span style="color:#0000f0">ENDP</span></div>
<div class="a mono" style="left:52px;top:577.6px;color:#262626">150</div>
<div class="a mono" style="left:104px;top:577.6px;width:596px;overflow:hidden;color:#141414">MemManage_Handler\</div>
<div class="a mono" style="left:52px;top:597.6px;color:#262626">151</div>
<div class="a mono" style="left:104px;top:597.6px;width:596px;overflow:hidden;color:#141414">                <span style="color:#0000f0">PROC</span></div>
<div class="a mono" style="left:52px;top:617.6px;color:#262626">152</div>
<div class="a mono" style="left:104px;top:617.6px;width:596px;overflow:hidden;color:#141414">                <span style="color:#0000f0">EXPORT</span>  MemManage_Handler          [WEAK]</div>
<div class="a mono" style="left:52px;top:637.6px;color:#262626">153</div>
<div class="a mono" style="left:104px;top:637.6px;width:596px;overflow:hidden;color:#141414">                <span style="color:#0000f0">B</span>       .</div>
<div class="a" style="left:702px;top:36.500px;width:21px;height:625px;background:#f0f0f0"></div>
<div class="a" style="left:703px;top:289px;width:17.500px;height:57px;background:#cdcdcd"></div>
<svg class="a" style="left:702px;top:36px" width="21" height="626" viewBox="0 0 21 626"><path d="M5.500 15.500l4.700-4.700 4.700 4.700" fill="none" stroke="#555" stroke-width="2.300"/><path d="M5.500 611l4.700 4.700 4.700-4.700" fill="none" stroke="#555" stroke-width="2.300"/></svg>
<div class="a" style="left:8px;top:661.500px;width:715px;height:20.500px;background:#f0f0f0"></div>
<div class="a" style="left:30px;top:662.500px;width:154.600px;height:17.500px;background:#cdcdcd"></div>
<svg class="a" style="left:8px;top:661px" width="715" height="21" viewBox="0 0 715 21"><path d="M13 5.500l-4.700 4.700 4.700 4.700" fill="none" stroke="#555" stroke-width="2.300"/><path d="M680 5.500l4.700 4.700-4.700 4.700" fill="none" stroke="#555" stroke-width="2.300"/></svg>
<div class="a" style="left:4.500px;top:682px;width:722.500px;height:24px;background:#f0f0f0"></div>
<svg class="a" style="left:0;top:680px" width="731" height="28" viewBox="439 718 731 28">
<path d="M444.800 720L546.900 720.500L546.700 722.300L540.500 743.800H451.900z" fill="#fff"/>
<path d="M445.300 721.300L451.800 743.400" stroke="#000" stroke-width="1.200"/>
<path d="M540.500 743.400L546.700 722.300H1165.500" fill="none" stroke="#000" stroke-width="1.300"/>
<path d="M544 733l4.200 10.400M706 743.400l7.400-21" fill="none" stroke="#000" stroke-width="1.200"/>
<path d="M443.500 744.300H1166" stroke="#c4c4c4" stroke-width="1"/>
<path d="M443.500 718V744.500" stroke="#8a8a8a" stroke-width="1.500"/>
</svg>
<div class="a" style="left:18.0px;top:686.9px;font-size:15.00px;line-height:15.00px;letter-spacing:-0.021px;white-space:pre;color:#0a0a14;font-weight:bold;">Text Editor</div>
<div class="a" style="left:124.4px;top:687.7px;font-size:14.00px;line-height:14.00px;letter-spacing:-0.256px;white-space:pre;color:#1a1a2a;">Configuration Wizard</div>
<div class="a" style="left:4.500px;top:706.500px;width:722.500px;height:1.500px;background:#fff"></div>
</div>
<!-- disasm -->
<div id="disasm" class="a" style="left:1175px;top:39px;width:745px;height:712px;overflow:hidden;background:#fff">
<div class="hdr" style="left:0;top:0;width:745px"></div>
<div class="a" style="left:6.0px;top:5.6px;font-size:14.20px;line-height:14.20px;letter-spacing:-0.362px;white-space:pre;color:#15152a;">Disassembly</div>
<svg class="a" style="left:705.0px;top:6.6px" width="10" height="11" viewBox="0 0 10 11"><path d="M2.100 0.600h5.400v6h-5.400z" fill="none" stroke="#000" stroke-width="1.200"/><rect x="4.700" y="0.600" width="3.400" height="6" fill="#000"/><rect x="0.200" y="6.300" width="8.800" height="1.800" fill="#000"/><rect x="3.900" y="8" width="1.600" height="2.700" fill="#000"/></svg>
<div class="xbtn" style="left:725.0px;top:5.0px"><svg width="15" height="15" viewBox="0 0 15 15"><path d="M4.200 4l5.900 5.500M10.100 4l-5.900 5.500" stroke="#fff" stroke-width="1.800"/></svg></div>
<div class="a" style="left:0.500px;top:25px;width:743.500px;height:683.500px;background:#fff;border-left:2px solid #7b7b7b;border-top:2px solid #7b7b7b;border-right:1px solid #e3e3e3;border-bottom:1px solid #e3e3e3"></div>
<div class="a" style="left:2.5px;top:27px;width:18.500px;height:20px;background:#c0c0c0"></div>
<div class="a" style="left:2.5px;top:47px;width:18.500px;height:20px;background:#c0c0c0"></div>
<div class="a" style="left:2.5px;top:67px;width:18.500px;height:20px;background:#c0c0c0"></div>
<div class="a" style="left:2.5px;top:87px;width:18.500px;height:20px;background:#c0c0c0"></div>
<div class="a" style="left:2.5px;top:107px;width:18.500px;height:20px;background:#c0c0c0"></div>
<div class="a" style="left:2.5px;top:127px;width:18.500px;height:20px;background:#c0c0c0"></div>
<div class="a" style="left:2.5px;top:147px;width:18.500px;height:20px;background:#c0c0c0"></div>
<div class="a" style="left:2.5px;top:167px;width:18.500px;height:20px;background:#c0c0c0"></div>
<div class="a" style="left:2.5px;top:187px;width:18.500px;height:20px;background:#c0c0c0"></div>
<div class="a" style="left:2.5px;top:207px;width:18.500px;height:20px;background:#c0c0c0"></div>
<div class="a" style="left:2.5px;top:227px;width:18.500px;height:20px;background:#c0c0c0 repeating-conic-gradient(#fff 0 25%,#c0c0c0 0 50%) 0 0/2px 2px"></div>
<div class="a" style="left:2.5px;top:247px;width:18.500px;height:20px;background:#c0c0c0"></div>
<div class="a" style="left:2.5px;top:267px;width:18.500px;height:20px;background:#c0c0c0 repeating-conic-gradient(#fff 0 25%,#c0c0c0 0 50%) 0 0/2px 2px"></div>
<div class="a" style="left:2.5px;top:287px;width:18.500px;height:20px;background:#c0c0c0"></div>
<div class="a" style="left:2.5px;top:307px;width:18.500px;height:20px;background:#c0c0c0 repeating-conic-gradient(#fff 0 25%,#c0c0c0 0 50%) 0 0/2px 2px"></div>
<div class="a" style="left:2.5px;top:327px;width:18.500px;height:20px;background:#c0c0c0"></div>
<div class="a" style="left:2.5px;top:347px;width:18.500px;height:20px;background:#c0c0c0 repeating-conic-gradient(#fff 0 25%,#c0c0c0 0 50%) 0 0/2px 2px"></div>
<div class="a" style="left:2.5px;top:367px;width:18.500px;height:20px;background:#c0c0c0 repeating-conic-gradient(#fff 0 25%,#c0c0c0 0 50%) 0 0/2px 2px"></div>
<div class="a" style="left:2.5px;top:387px;width:18.500px;height:20px;background:#c0c0c0 repeating-conic-gradient(#fff 0 25%,#c0c0c0 0 50%) 0 0/2px 2px"></div>
<div class="a" style="left:2.5px;top:407px;width:18.500px;height:20px;background:#c0c0c0 repeating-conic-gradient(#fff 0 25%,#c0c0c0 0 50%) 0 0/2px 2px"></div>
<div class="a" style="left:2.5px;top:427px;width:18.500px;height:20px;background:#c0c0c0 repeating-conic-gradient(#fff 0 25%,#c0c0c0 0 50%) 0 0/2px 2px"></div>
<div class="a" style="left:2.5px;top:447px;width:18.500px;height:20px;background:#c0c0c0 repeating-conic-gradient(#fff 0 25%,#c0c0c0 0 50%) 0 0/2px 2px"></div>
<div class="a" style="left:2.5px;top:467px;width:18.500px;height:20px;background:#c0c0c0 repeating-conic-gradient(#fff 0 25%,#c0c0c0 0 50%) 0 0/2px 2px"></div>
<div class="a" style="left:2.5px;top:487px;width:18.500px;height:20px;background:#c0c0c0"></div>
<div class="a" style="left:2.5px;top:507px;width:18.500px;height:20px;background:#c0c0c0 repeating-conic-gradient(#fff 0 25%,#c0c0c0 0 50%) 0 0/2px 2px"></div>
<div class="a" style="left:2.5px;top:527px;width:18.500px;height:20px;background:#c0c0c0 repeating-conic-gradient(#fff 0 25%,#c0c0c0 0 50%) 0 0/2px 2px"></div>
<div class="a" style="left:2.5px;top:547px;width:18.500px;height:20px;background:#c0c0c0 repeating-conic-gradient(#fff 0 25%,#c0c0c0 0 50%) 0 0/2px 2px"></div>
<div class="a" style="left:2.5px;top:567px;width:18.500px;height:20px;background:#c0c0c0 repeating-conic-gradient(#fff 0 25%,#c0c0c0 0 50%) 0 0/2px 2px"></div>
<div class="a" style="left:2.5px;top:587px;width:18.500px;height:20px;background:#c0c0c0 repeating-conic-gradient(#fff 0 25%,#c0c0c0 0 50%) 0 0/2px 2px"></div>
<div class="a" style="left:2.5px;top:607px;width:18.500px;height:20px;background:#c0c0c0"></div>
<div class="a" style="left:2.5px;top:627px;width:18.500px;height:20px;background:#c0c0c0 repeating-conic-gradient(#fff 0 25%,#c0c0c0 0 50%) 0 0/2px 2px"></div>
<div class="a" style="left:2.5px;top:647px;width:18.500px;height:20px;background:#c0c0c0 repeating-conic-gradient(#fff 0 25%,#c0c0c0 0 50%) 0 0/2px 2px"></div>
<div class="a" style="left:2.5px;top:667px;width:18.500px;height:20px;background:#c0c0c0 repeating-conic-gradient(#fff 0 25%,#c0c0c0 0 50%) 0 0/2px 2px"></div>
<div class="a" style="left:2.5px;top:247px;width:18.500px;height:20px;background:#007c00"></div>
<div class="a" style="left:2.5px;top:287px;width:18.500px;height:20px;background:#008000"></div>
<svg class="a" style="left:2.5px;top:247px" width="19" height="20" viewBox="0 0 19 20"><path d="M2.500 7.300h8v-3.600l6.300 6.300-6.300 6.300v-3.600h-8z" fill="#ffef00" stroke="#000" stroke-width="1.200"/></svg>
<div class="a" style="left:22px;top:207px;width:699.200px;height:40px;background:#000"></div>
<div class="a" style="left:22px;top:247px;width:699.200px;height:20px;background:#ffff00"></div>
<div class="a mono" style="left:22px;top:27.6px;width:699px;overflow:hidden;color:#141414">0x080000D8 0107      DCW      0x0107</div>
<div class="a mono" style="left:22px;top:47.6px;width:699px;overflow:hidden;color:#141414">0x080000DA 0800      DCW      0x0800</div>
<div class="a mono" style="left:22px;top:67.6px;width:699px;overflow:hidden;color:#141414">0x080000DC 0107      DCW      0x0107</div>
<div class="a mono" style="left:22px;top:87.6px;width:699px;overflow:hidden;color:#141414">0x080000DE 0800      DCW      0x0800</div>
<div class="a mono" style="left:22px;top:107.6px;width:699px;overflow:hidden;color:#141414">0x080000E0 0107      DCW      0x0107</div>
<div class="a mono" style="left:22px;top:127.6px;width:699px;overflow:hidden;color:#141414">0x080000E2 0800      DCW      0x0800</div>
<div class="a mono" style="left:22px;top:147.6px;width:699px;overflow:hidden;color:#141414">0x080000E4 0107      DCW      0x0107</div>
<div class="a mono" style="left:22px;top:167.6px;width:699px;overflow:hidden;color:#141414">0x080000E6 0800      DCW      0x0800</div>
<div class="a mono" style="left:22px;top:187.6px;width:699px;overflow:hidden;color:#141414">0x080000E8 0107      DCW      0x0107</div>
<div class="a mono" style="left:22px;top:207.6px;width:699px;overflow:hidden;color:#fff">0x080000EA 0800      DCW      0x0800</div>
<div class="a mono" style="left:22px;top:227.6px;width:699px;overflow:hidden;color:#86f4f4">   133:                  LDR     R0, =SystemInit</div>
<div class="a mono" style="left:22px;top:247.6px;width:699px;overflow:hidden;color:#141414">0x080000EC 4809      LDR      r0,[pc,#36]  ; @0x08000114</div>
<div class="a mono" style="left:22px;top:267.6px;width:699px;overflow:hidden;color:#801a1a">   134:                  BLX     R0</div>
<div class="a mono" style="left:22px;top:287.6px;width:699px;overflow:hidden;color:#141414">0x080000EE 4780      BLX      r0</div>
<div class="a mono" style="left:22px;top:307.6px;width:699px;overflow:hidden;color:#801a1a">   135:                  LDR     R0, =__main</div>
<div class="a mono" style="left:22px;top:327.6px;width:699px;overflow:hidden;color:#141414">0x080000F0 4809      LDR      r0,[pc,#36]  ; @0x08000118</div>
<div class="a mono" style="left:22px;top:347.6px;width:699px;overflow:hidden;color:#801a1a">   136:                  BX      R0</div>
<div class="a mono" style="left:22px;top:367.6px;width:699px;overflow:hidden;color:#801a1a">   137:                  ENDP</div>
<div class="a mono" style="left:22px;top:387.6px;width:699px;overflow:hidden;color:#801a1a">   138: </div>
<div class="a mono" style="left:22px;top:407.6px;width:699px;overflow:hidden;color:#801a1a">   139: ; Dummy Exception Handlers (infinite loops which can be modified)</div>
<div class="a mono" style="left:22px;top:427.6px;width:699px;overflow:hidden;color:#801a1a">   140: </div>
<div class="a mono" style="left:22px;top:447.6px;width:699px;overflow:hidden;color:#801a1a">   141: NMI_Handler     PROC</div>
<div class="a mono" style="left:22px;top:467.6px;width:699px;overflow:hidden;color:#801a1a">   142:                 EXPORT  NMI_Handler                [WEAK]</div>
<div class="a mono" style="left:22px;top:487.6px;width:699px;overflow:hidden;color:#141414">0x080000F2 4700      BX       r0</div>
<div class="a mono" style="left:22px;top:507.6px;width:699px;overflow:hidden;color:#801a1a">   143:                 B       .</div>
<div class="a mono" style="left:22px;top:527.6px;width:699px;overflow:hidden;color:#801a1a">   144:                 ENDP</div>
<div class="a mono" style="left:22px;top:547.6px;width:699px;overflow:hidden;color:#801a1a">   145: HardFault_Handler\</div>
<div class="a mono" style="left:22px;top:567.6px;width:699px;overflow:hidden;color:#801a1a">   146:                 PROC</div>
<div class="a mono" style="left:22px;top:587.6px;width:699px;overflow:hidden;color:#801a1a">   147:                 EXPORT  HardFault_Handler          [WEAK]</div>
<div class="a mono" style="left:22px;top:607.6px;width:699px;overflow:hidden;color:#141414">0x080000F4 E7FE      B        NMI_Handler (0x080000F4)</div>
<div class="a mono" style="left:22px;top:627.6px;width:699px;overflow:hidden;color:#801a1a">   148:                 B       .</div>
<div class="a mono" style="left:22px;top:647.6px;width:699px;overflow:hidden;color:#801a1a">   149:                 ENDP</div>
<div class="a mono" style="left:22px;top:667.6px;width:699px;overflow:hidden;color:#801a1a">   150: MemManage_Handler\</div>
<div class="a" style="left:722px;top:27px;width:21px;height:660.500px;background:#f0f0f0"></div>
<div class="a" style="left:723px;top:644.700px;width:18px;height:20.700px;background:#cdcdcd"></div>
<svg class="a" style="left:722px;top:27px" width="21" height="661" viewBox="0 0 21 661"><path d="M5.800 14l4.700-4.700 4.700 4.700" fill="none" stroke="#555" stroke-width="2.300"/><path d="M5.800 647.500l4.700 4.700 4.700-4.700" fill="none" stroke="#555" stroke-width="2.300"/></svg>
<div class="a" style="left:2.500px;top:687.500px;width:740.500px;height:20.500px;background:#f0f0f0"></div>
<div class="a" style="left:24.400px;top:688.700px;width:20.200px;height:18px;background:#cdcdcd"></div>
<svg class="a" style="left:2.500px;top:687.500px" width="741" height="21" viewBox="0 0 741 21"><path d="M12.500 5.300l-4.700 4.700 4.700 4.700" fill="none" stroke="#555" stroke-width="2.300"/><path d="M706 5.300l4.700 4.700-4.700 4.700" fill="none" stroke="#555" stroke-width="2.300"/></svg>
</div>
<!-- cmd -->
<div id="cmd" class="a" style="left:0;top:755px;width:960px;height:162px;overflow:hidden;background:#f0f0f0">
<div class="hdr" style="left:0;top:0;width:960px;height:22.500px"></div>
<div class="a" style="left:5.0px;top:5.0px;font-size:14.20px;line-height:14.20px;letter-spacing:-0.215px;white-space:pre;color:#15152a;">Command</div>
<svg class="a" style="left:920.0px;top:6.7px" width="10" height="11" viewBox="0 0 10 11"><path d="M2.100 0.600h5.400v6h-5.400z" fill="none" stroke="#000" stroke-width="1.200"/><rect x="4.700" y="0.600" width="3.400" height="6" fill="#000"/><rect x="0.200" y="6.300" width="8.800" height="1.800" fill="#000"/><rect x="3.900" y="8" width="1.600" height="2.700" fill="#000"/></svg>
<div class="xbtn" style="left:940.0px;top:4.8px"><svg width="15" height="15" viewBox="0 0 15 15"><path d="M4.200 4l5.900 5.500M10.100 4l-5.900 5.500" stroke="#fff" stroke-width="1.800"/></svg></div>
<div class="a" style="left:0;top:22.500px;width:960px;height:3px;background:#fff"></div>
<div class="a" style="left:0;top:25.500px;width:960px;height:79px;background:#fff;border-left:2px solid #7b7b7b;border-top:2px solid #7b7b7b;border-right:2px solid #e8e8e8"></div>
<div class="a mono" style="left:5px;top:28.1px;color:#111">*** error 65: access violation at 0x40021000 : no 'read' permission</div>
<div class="a mono" style="left:5px;top:48.1px;color:#111">*** error 65: access violation at 0x40021000 : no 'read' permission</div>
<div class="a" style="left:937.500px;top:27.500px;width:20.500px;height:56px;background:#f0f0f0"></div>
<svg class="a" style="left:937.500px;top:27.500px" width="21" height="56" viewBox="0 0 21 56"><path d="M5.500 13.500l4.700-4.700 4.700 4.700" fill="none" stroke="#555" stroke-width="2.300"/><path d="M5.500 42l4.700 4.700 4.700-4.700" fill="none" stroke="#555" stroke-width="2.300"/></svg>
<div class="a" style="left:2px;top:83.500px;width:956px;height:20px;background:#f0f0f0"></div>
<svg class="a" style="left:2px;top:83.500px" width="956" height="20" viewBox="0 0 956 20"><path d="M12.500 5l-4.700 4.700 4.700 4.700" fill="none" stroke="#bdbdbd" stroke-width="2"/><path d="M921.500 5l4.700 4.700-4.700 4.700" fill="none" stroke="#bdbdbd" stroke-width="2"/></svg>
<div class="a" style="left:0;top:104px;width:960px;height:2px;background:#fff"></div>
<div class="a" style="left:0;top:106.500px;width:960px;height:1.500px;background:#f6f6f6"></div>
<div class="a" style="left:0;top:108.500px;width:960px;height:1.800px;background:#8c8c8c"></div>
<div class="a" style="left:0;top:110.300px;width:960px;height:22.700px;background:#fff"></div>
<div class="a" style="left:0;top:110.300px;width:20px;height:22.700px;background:#f0f0f0"></div>
<div class="a mono" style="left:8.500px;top:112.0px;color:#333">&gt;</div>
<div class="a" style="left:1px;top:135.500px;width:958.500px;height:25px;background:#f0f0f0;border-left:1px solid #d4d4d4;border-top:1px solid #e4e4e4;border-right:1.500px solid #8c8c8c;border-bottom:1.500px solid #9c9c9c"></div>
<div class="a mono" style="left:3.500px;top:138.1px;color:#111">ASSIGN BreakDisable BreakEnable BreakKill BreakList BreakSet BreakAccess COVERAGE DEFINE DIR</div>
</div>
<!-- cs -->
<div id="cs" class="a" style="left:965px;top:755px;width:955px;height:162px;overflow:hidden;background:#f5f5f5">
<div class="hdr" style="left:0;top:0;width:955px;height:22.500px"></div>
<div class="a" style="left:5.0px;top:5.0px;font-size:14.20px;line-height:14.20px;letter-spacing:-0.218px;white-space:pre;color:#15152a;">Call Stack + Locals</div>
<svg class="a" style="left:915.0px;top:6.7px" width="10" height="11" viewBox="0 0 10 11"><path d="M2.100 0.600h5.400v6h-5.400z" fill="none" stroke="#000" stroke-width="1.200"/><rect x="4.700" y="0.600" width="3.400" height="6" fill="#000"/><rect x="0.200" y="6.300" width="8.800" height="1.800" fill="#000"/><rect x="3.900" y="8" width="1.600" height="2.700" fill="#000"/></svg>
<div class="xbtn" style="left:935.0px;top:4.8px"><svg width="15" height="15" viewBox="0 0 15 15"><path d="M4.200 4l5.900 5.500M10.100 4l-5.900 5.500" stroke="#fff" stroke-width="1.800"/></svg></div>
<div class="a" style="left:0;top:22.500px;width:955px;height:3px;background:#fff"></div>
<div class="a" style="left:0;top:24.500px;width:954px;height:108px;background:#fff;border-left:1.500px solid #6a6a6a;border-top:1.500px solid #9a9a9a;border-right:1px solid #d8d8d8"></div>
<div class="a" style="left:169.0px;top:28px;width:1.200px;height:30px;background:#e4e4e4"></div>
<div class="a" style="left:335.4px;top:28px;width:1.200px;height:30px;background:#e4e4e4"></div>
<div class="a" style="left:501.8px;top:28px;width:1.200px;height:30px;background:#e4e4e4"></div>
<div class="a" style="left:10.0px;top:36.0px;font-size:14.60px;line-height:14.60px;letter-spacing:0.264px;white-space:pre;color:#15152a;">Name</div>
<div class="a" style="left:176.0px;top:36.0px;font-size:14.60px;line-height:14.60px;letter-spacing:0.249px;white-space:pre;color:#15152a;">Location/Value</div>
<div class="a" style="left:343.0px;top:36.0px;font-size:14.60px;line-height:14.60px;letter-spacing:-0.663px;white-space:pre;color:#15152a;">Type</div>
<div class="a" style="left:154.500px;top:131.800px;width:800px;height:1.700px;background:#111"></div>
<div class="a" style="left:3.700px;top:132.500px;width:152.500px;height:28.300px;background:#f0f0f0;border-right:1.700px solid #111;border-bottom:1.700px solid #111"></div>
<svg class="a" style="left:7px;top:137px" width="21" height="20" viewBox="0 0 21 20"><rect x="4.500" y="1" width="8.400" height="7.200" fill="#f8f9fd" stroke="#70788c"/><rect x="8.500" y="5" width="8.400" height="7.200" fill="#f8f9fd" stroke="#70788c"/><rect x="11.500" y="9" width="8.400" height="7.600" fill="#f8f9fd" stroke="#70788c"/><path d="M1 10c0.300-2.400 1.800-3.600 3.600-3.600l0.300 4.400 3.800 1.600-0.500 3.400-2.200 1.600c-2.800-0.400-5-3.400-5-7.400z" fill="#4a88ee"/><path d="M3.500 15.500l5 0.400-2.800 2.800z" fill="#2a58c8"/></svg>
<div class="a" style="left:30.5px;top:140.1px;font-size:14.60px;line-height:14.60px;letter-spacing:-0.398px;white-space:pre;color:#15152a;">Call Stack + Locals</div>
<svg class="a" style="left:162px;top:137px" width="18" height="16" viewBox="0 0 18 16"><rect x="0.500" y="0.500" width="17" height="15" fill="#f4f6fc" stroke="#7a86a4"/><rect x="0.500" y="0.500" width="17" height="3" fill="#5b86e0"/><rect x="2.6" y="5.3" width="1.300" height="1.300" fill="#6a7694"/><rect x="5.5" y="5.3" width="1.300" height="1.300" fill="#6a7694"/><rect x="8.4" y="5.3" width="1.300" height="1.300" fill="#6a7694"/><rect x="11.3" y="5.3" width="1.300" height="1.300" fill="#6a7694"/><rect x="14.2" y="5.3" width="1.300" height="1.300" fill="#6a7694"/><rect x="2.6" y="7.9" width="1.300" height="1.300" fill="#6a7694"/><rect x="5.5" y="7.9" width="1.300" height="1.300" fill="#6a7694"/><rect x="8.4" y="7.9" width="1.300" height="1.300" fill="#6a7694"/><rect x="11.3" y="7.9" width="1.300" height="1.300" fill="#6a7694"/><rect x="14.2" y="7.9" width="1.300" height="1.300" fill="#6a7694"/><rect x="2.6" y="10.5" width="1.300" height="1.300" fill="#6a7694"/><rect x="5.5" y="10.5" width="1.300" height="1.300" fill="#6a7694"/><rect x="8.4" y="10.5" width="1.300" height="1.300" fill="#6a7694"/><rect x="11.3" y="10.5" width="1.300" height="1.300" fill="#6a7694"/><rect x="14.2" y="10.5" width="1.300" height="1.300" fill="#6a7694"/><rect x="2.6" y="13.1" width="1.300" height="1.300" fill="#6a7694"/><rect x="5.5" y="13.1" width="1.300" height="1.300" fill="#6a7694"/><rect x="8.4" y="13.1" width="1.300" height="1.300" fill="#6a7694"/><rect x="11.3" y="13.1" width="1.300" height="1.300" fill="#6a7694"/><rect x="14.2" y="13.1" width="1.300" height="1.300" fill="#6a7694"/></svg>
<div class="a" style="left:184.0px;top:140.1px;font-size:14.60px;line-height:14.60px;letter-spacing:-0.488px;white-space:pre;color:#9a9aae;">Memory 1</div>
<div class="a" style="left:253.0px;top:138px;width:1px;height:18px;background:#c8c8c8"></div>
</div>
<!-- status -->
<div id="status" class="a" style="left:0;top:917px;width:1920px;height:23px;background:#f0f0f0;overflow:hidden">
<div class="a" style="left:0;top:0;width:1920px;height:1px;background:#f8f8f8"></div>
<div class="a" style="left:1270.3px;top:2.500px;width:1.200px;height:19px;background:#dcdcdc"></div>
<div class="a" style="left:1460.6px;top:2.500px;width:1.200px;height:19px;background:#dcdcdc"></div>
<div class="a" style="left:1616.6px;top:2.500px;width:1.200px;height:19px;background:#dcdcdc"></div>
<div class="a" style="left:1733.3px;top:2.500px;width:1.200px;height:19px;background:#dcdcdc"></div>
<div class="a" style="left:1765.8px;top:2.500px;width:1.200px;height:19px;background:#dcdcdc"></div>
<div class="a" style="left:1805.4px;top:2.500px;width:1.200px;height:19px;background:#dcdcdc"></div>
<div class="a" style="left:1845.0px;top:2.500px;width:1.200px;height:19px;background:#dcdcdc"></div>
<div class="a" style="left:1881.0px;top:2.500px;width:1.200px;height:19px;background:#dcdcdc"></div>
<div class="a" style="left:1276.4px;top:5.8px;font-size:14.40px;line-height:14.40px;letter-spacing:0.097px;white-space:pre;color:#15152a;">Simulation</div>
<div class="a" style="left:1466.0px;top:5.8px;font-size:14.40px;line-height:14.40px;letter-spacing:-0.417px;white-space:pre;color:#15152a;">t1: 0.00000000 sec</div>
<div class="a" style="left:1622.6px;top:5.8px;font-size:14.40px;line-height:14.40px;letter-spacing:-0.783px;white-space:pre;color:#15152a;">L:133 C:1</div>
<div class="a" style="left:1739.0px;top:5.8px;font-size:14.40px;line-height:14.40px;letter-spacing:-1.536px;white-space:pre;color:#8d8d9d;">CAP</div>
<div class="a" style="left:1771.0px;top:5.8px;font-size:14.40px;line-height:14.40px;letter-spacing:-0.265px;white-space:pre;color:#8d8d9d;">NUM</div>
<div class="a" style="left:1811.0px;top:5.8px;font-size:14.40px;line-height:14.40px;letter-spacing:-1.853px;white-space:pre;color:#8d8d9d;">SCRL</div>
<div class="a" style="left:1851.0px;top:5.8px;font-size:14.40px;line-height:14.40px;letter-spacing:-1.235px;white-space:pre;color:#8d8d9d;">OVR</div>
<div class="a" style="left:1887.0px;top:5.8px;font-size:14.40px;line-height:14.40px;letter-spacing:-0.330px;white-space:pre;color:#8d8d9d;">R/W</div>
</div>
<div class="a" style="left:0;top:940px;width:1920px;height:3px;background:#e7dfdb"></div>
<!-- lyric -->
<div style="position:absolute;left:1163.8px;top:871.2px;font-family:'Liberation Sans',sans-serif;font-weight:bold;font-size:51.7px;line-height:51.7px;white-space:pre;transform-origin:0 0;transform:scaleX(0.839);color:rgba(90,90,90,.8);-webkit-text-stroke:0.900px rgba(80,80,80,.8);text-shadow:0 0 1.500px rgba(70,70,70,.9),1.200px 1.200px 1.500px rgba(60,60,60,.85),2.200px 2.200px 2.500px rgba(80,80,80,.5)">Just</div>
<div style="position:absolute;left:1268.6px;top:871.2px;font-family:'Liberation Sans',sans-serif;font-weight:bold;font-size:51.7px;line-height:51.7px;white-space:pre;transform-origin:0 0;transform:scaleX(0.892);color:rgba(90,90,90,.8);-webkit-text-stroke:0.900px rgba(80,80,80,.8);text-shadow:0 0 1.500px rgba(70,70,70,.9),1.200px 1.200px 1.500px rgba(60,60,60,.85),2.200px 2.200px 2.500px rgba(80,80,80,.5)">come</div>
<div style="position:absolute;left:1404.4px;top:871.2px;font-family:'Liberation Sans',sans-serif;font-weight:bold;font-size:51.7px;line-height:51.7px;white-space:pre;transform-origin:0 0;transform:scaleX(0.871);color:rgba(90,90,90,.8);-webkit-text-stroke:0.900px rgba(80,80,80,.8);text-shadow:0 0 1.500px rgba(70,70,70,.9),1.200px 1.200px 1.500px rgba(60,60,60,.85),2.200px 2.200px 2.500px rgba(80,80,80,.5)">on</div>
<div style="position:absolute;left:1476.0px;top:871.2px;font-family:'Liberation Sans',sans-serif;font-weight:bold;font-size:51.7px;line-height:51.7px;white-space:pre;transform-origin:0 0;transform:scaleX(0.916);color:rgba(90,90,90,.8);-webkit-text-stroke:0.900px rgba(80,80,80,.8);text-shadow:0 0 1.500px rgba(70,70,70,.9),1.200px 1.200px 1.500px rgba(60,60,60,.85),2.200px 2.200px 2.500px rgba(80,80,80,.5)">over</div>
<div style="position:absolute;left:1590.6px;top:871.2px;font-family:'Liberation Sans',sans-serif;font-weight:bold;font-size:51.7px;line-height:51.7px;white-space:pre;transform-origin:0 0;transform:scaleX(0.902);color:rgba(90,90,90,.8);-webkit-text-stroke:0.900px rgba(80,80,80,.8);text-shadow:0 0 1.500px rgba(70,70,70,.9),1.200px 1.200px 1.500px rgba(60,60,60,.85),2.200px 2.200px 2.500px rgba(80,80,80,.5)">my</div>
<div style="position:absolute;left:1674.1px;top:871.2px;font-family:'Liberation Sans',sans-serif;font-weight:bold;font-size:51.7px;line-height:51.7px;white-space:pre;transform-origin:0 0;transform:scaleX(0.889);color:rgba(90,90,90,.8);-webkit-text-stroke:0.900px rgba(80,80,80,.8);text-shadow:0 0 1.500px rgba(70,70,70,.9),1.200px 1.200px 1.500px rgba(60,60,60,.85),2.200px 2.200px 2.500px rgba(80,80,80,.5)">way</div>
<div style="position:absolute;left:1163.8px;top:871.2px;font-family:'Liberation Sans',sans-serif;font-weight:bold;font-size:51.7px;line-height:51.7px;white-space:pre;transform-origin:0 0;transform:scaleX(0.839);background:linear-gradient(#fdf9ae 0%,#fbf69c 22%,#f7f088 50%,#e9de62 54%,#ede36c 75%,#f3eb80 100%);-webkit-background-clip:text;background-clip:text;-webkit-text-fill-color:transparent;color:transparent">Just</div>
<div style="position:absolute;left:1268.6px;top:871.2px;font-family:'Liberation Sans',sans-serif;font-weight:bold;font-size:51.7px;line-height:51.7px;white-space:pre;transform-origin:0 0;transform:scaleX(0.892);background:linear-gradient(#fdf9ae 0%,#fbf69c 22%,#f7f088 50%,#e9de62 54%,#ede36c 75%,#f3eb80 100%);-webkit-background-clip:text;background-clip:text;-webkit-text-fill-color:transparent;color:transparent">come</div>
<div style="position:absolute;left:1404.4px;top:871.2px;font-family:'Liberation Sans',sans-serif;font-weight:bold;font-size:51.7px;line-height:51.7px;white-space:pre;transform-origin:0 0;transform:scaleX(0.871);background:linear-gradient(#fdf9ae 0%,#fbf69c 22%,#f7f088 50%,#e9de62 54%,#ede36c 75%,#f3eb80 100%);-webkit-background-clip:text;background-clip:text;-webkit-text-fill-color:transparent;color:transparent">on</div>
<div style="position:absolute;left:1476.0px;top:871.2px;font-family:'Liberation Sans',sans-serif;font-weight:bold;font-size:51.7px;line-height:51.7px;white-space:pre;transform-origin:0 0;transform:scaleX(0.916);background:linear-gradient(#fdf9ae 0%,#fbf69c 22%,#f7f088 50%,#e9de62 54%,#ede36c 75%,#f3eb80 100%);-webkit-background-clip:text;background-clip:text;-webkit-text-fill-color:transparent;color:transparent">over</div>
<div style="position:absolute;left:1590.6px;top:871.2px;font-family:'Liberation Sans',sans-serif;font-weight:bold;font-size:51.7px;line-height:51.7px;white-space:pre;transform-origin:0 0;transform:scaleX(0.902);background:linear-gradient(#fdf9ae 0%,#fbf69c 22%,#f7f088 50%,#e9de62 54%,#ede36c 75%,#f3eb80 100%);-webkit-background-clip:text;background-clip:text;-webkit-text-fill-color:transparent;color:transparent">my</div>
<div style="position:absolute;left:1674.1px;top:871.2px;font-family:'Liberation Sans',sans-serif;font-weight:bold;font-size:51.7px;line-height:51.7px;white-space:pre;transform-origin:0 0;transform:scaleX(0.889);background:linear-gradient(#fdf9ae 0%,#fbf69c 22%,#f7f088 50%,#e9de62 54%,#ede36c 75%,#f3eb80 100%);-webkit-background-clip:text;background-clip:text;-webkit-text-fill-color:transparent;color:transparent">way</div>
<div style="position:absolute;left:1166px;top:886.800px;width:594px;height:1.700px;background:rgba(0,0,0,.28)"></div>
</body></html>
